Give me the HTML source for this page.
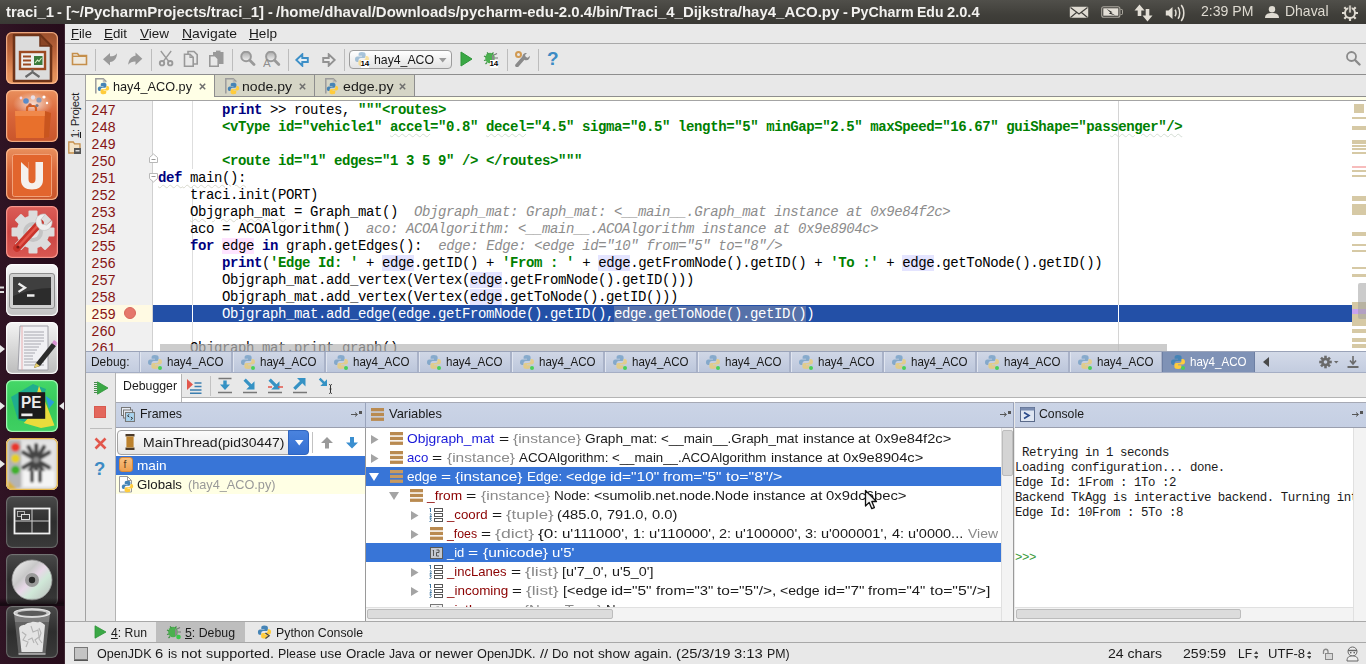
<!DOCTYPE html>
<html>
<head>
<meta charset="utf-8">
<title>PyCharm Edu</title>
<style>
*{box-sizing:border-box;margin:0;padding:0}
html,body{width:1366px;height:664px;overflow:hidden;background:#e8e8e8;font-family:"Liberation Sans",sans-serif;}
.abs{position:absolute}
.t{position:absolute;white-space:pre;line-height:1}
.ln{position:absolute;left:5.600px;font-size:14px;letter-spacing:.25px;color:#861414;line-height:17px;height:17px}
.cl{position:absolute;left:72px;font-family:"Liberation Mono",monospace;font-size:14px;letter-spacing:-0.4px;line-height:17px;height:17px;white-space:pre;color:#000}
.con{font-family:"Liberation Mono",monospace;font-size:12.4px;letter-spacing:-0.44px;line-height:14px}
.kw{color:#000080;font-weight:bold}
.st{color:#008000;font-weight:bold}
.hint{color:#8c8c8c;font-style:italic}
.hl{background:#e4e4ff}
.hlw{background:#ffe4ff}
.wv{text-decoration:underline wavy #d8d8cc 1px;text-underline-offset:2px}
.wv2{text-decoration:underline wavy #d4dcd4 1px;text-underline-offset:2px}
</style>
</head>
<body>
<div class="abs" style="left:0px;top:0px;width:1366px;height:24px;background:linear-gradient(#504f4a,#403f3a 60%,#3a3935)"></div>
<div class="t " id="t1" style="left:6.0px;top:4.5px;font-size:14.8px;color:#f2f1ef;font-weight:bold;transform:scaleX(1.0048);transform-origin:0 0;">traci_1</div>
<div class="t " id="t2" style="left:57.48px;top:4.5px;font-size:14.8px;color:#f2f1ef;font-weight:bold;transform:scaleX(0.9884);transform-origin:0 0;">-</div>
<div class="t " id="t3" style="left:65.89px;top:4.5px;font-size:14.8px;color:#f2f1ef;font-weight:bold;transform:scaleX(1.0140);transform-origin:0 0;">[~/PycharmProjects/traci_1]</div>
<div class="t " id="t4" style="left:267.5px;top:4.5px;font-size:14.8px;color:#f2f1ef;font-weight:bold;transform:scaleX(0.9884);transform-origin:0 0;">-</div>
<div class="t " id="t5" style="left:275.91px;top:4.5px;font-size:14.8px;color:#f2f1ef;font-weight:bold;transform:scaleX(1.0119);transform-origin:0 0;">/home/dhaval/Downloads/pycharm-edu-2.0.4/bin/Traci_4_Dijkstra/hay4_ACO.py</div>
<div class="t " id="t6" style="left:842.76px;top:4.5px;font-size:14.8px;color:#f2f1ef;font-weight:bold;transform:scaleX(0.9884);transform-origin:0 0;">-</div>
<div class="t " id="t7" style="left:851.17px;top:4.5px;font-size:14.8px;color:#f2f1ef;font-weight:bold;transform:scaleX(0.9648);transform-origin:0 0;">PyCharm</div>
<div class="t " id="t8" style="left:917.38px;top:4.5px;font-size:14.8px;color:#f2f1ef;font-weight:bold;transform:scaleX(0.9487);transform-origin:0 0;">Edu</div>
<div class="t " id="t9" style="left:947.44px;top:4.5px;font-size:14.8px;color:#f2f1ef;font-weight:bold;transform:scaleX(0.9890);transform-origin:0 0;">2.0.4</div>
<svg class="abs" style="left:1069px;top:6px;" width="20" height="13" viewBox="0 0 20 13"><rect x=".8" y=".8" width="18.400" height="11" rx="1" fill="#dfdbd2"/><path d="M1.500 1.500 10 8l8.500-6.500M1.500 11.500 7.500 6.500M18.500 11.500l-6-5" fill="none" stroke="#3f3e3a" stroke-width="1.100"/></svg>
<svg class="abs" style="left:1101px;top:6px;" width="22" height="12" viewBox="0 0 22 12"><rect x=".7" y=".7" width="18.200" height="10.600" rx="2" fill="none" stroke="#aaa79e" stroke-width="1.100"/><path d="M19.500 3.500h1.300c.5 0 .7.300.7.700v3.600c0 .4-.2.700-.7.700h-1.300" fill="none" stroke="#aaa79e" stroke-width="1"/><rect x="2.300" y="2.300" width="15" height="7.400" fill="#e3dfd6"/><path d="M5.500 2.800 11.500 6.300 9.800 6.800l4.700 2.600-6.800-2 1.800-.7z" fill="#2f2e2b"/></svg>
<svg class="abs" style="left:1133.5px;top:3.5px;" width="19" height="18" viewBox="0 0 19 18"><path d="M5.500.5.5 6.500h3.200V12h3.600V6.500h3.200z M13.500 17.500l5-6h-3.200V5h-3.600v6.500H8.500z" fill="#e3dfd6"/></svg>
<svg class="abs" style="left:1165px;top:3.5px;" width="21" height="18" viewBox="0 0 21 18"><path d="M.8 6.500h2.700L7.500 3v12l-4-3.500H.8z" fill="#e3dfd6"/><path d="M10 5.800c1.300 1.500 1.300 5 0 6.500M13 3.300c2.300 2.700 2.300 8.700 0 11.400M16.200 1c3.500 4 3.500 12 0 16" fill="none" stroke="#e3dfd6" stroke-width="1.500"/></svg>
<div class="t " id="t10" style="left:1201px;top:4px;font-size:14.6px;color:#dfdbd2;transform:scaleX(0.9658);transform-origin:0 0;">2:39 PM</div>
<svg class="abs" style="left:1265px;top:6px;" width="14" height="12" viewBox="0 0 14 12"><circle cx="7" cy="3.300" r="3.200" fill="#dfdbd2"/><path d="M0 12c0-4 3-5 7-5s7 1 7 5z" fill="#dfdbd2"/></svg>
<div class="t " id="t11" style="left:1285px;top:4px;font-size:14.6px;color:#dfdbd2;transform:scaleX(0.9574);transform-origin:0 0;">Dhaval</div>
<svg class="abs" style="left:1341px;top:4px;" width="18" height="17" viewBox="0 0 18 17"><g fill="none" stroke="#dfdbd2"><circle cx="9" cy="9" r="5" stroke-width="2"/><path d="M9 1v3M9 14v3M1 9h3M14 9h3M3.300 3.300l2 2M12.700 12.700l2 2M3.300 14.700l2-2M12.700 5.300l2-2" stroke-width="2.200"/></g><rect x="7.800" y="1" width="2.400" height="8" fill="#dfdbd2" stroke="#403f3a" stroke-width=".8"/></svg>
<div class="abs" style="left:0px;top:24px;width:65px;height:640px;background:linear-gradient(90deg,#301424,#2a0f1e 50%,#260c1a);border-right:1px solid #3d2431"></div>
<div class="abs" style="left:6px;top:32px;width:52px;height:52px;border-radius:6px;background:linear-gradient(#9a4f2c,#b9623a 35%,#e38d58 80%,#e9985f);box-shadow:inset 0 0 0 1px rgba(255,190,150,.55);overflow:hidden"><svg width="52" height="52" viewBox="0 0 52 52"><path d="M8 3h26l11 11v35H8z" fill="#dcdcdc" stroke="#6e3318" stroke-width="2.600" stroke-linejoin="round"/><path d="M34 3v11h11z" fill="#8a4525" stroke="#6e3318" stroke-width="1.500"/><rect x="14" y="20" width="25" height="17" fill="#efefef" stroke="#9c4a22" stroke-width="2.400"/><path d="M17 24.500h8M17 28.500h8M17 32.500h8" stroke="#9c4a22" stroke-width="2.200"/><rect x="28" y="24" width="8.500" height="9" fill="#3b7a3b"/><path d="M29 31l2.500-3 1.500 1.500 2.500-3.500" stroke="#d8f0c8" fill="none" stroke-width="1.100"/><path d="M26.500 37v3M19.500 45l7-5 7 5" stroke="#6a6a6a" stroke-width="2.200" fill="none"/></svg><div style="position:absolute;left:0;top:0;width:52px;height:52px;border-radius:6px;box-shadow:inset 0 0 0 1.300px rgba(255,190,150,.55)"></div></div>
<div class="abs" style="left:6px;top:90px;width:52px;height:52px;border-radius:6px;background:linear-gradient(#e9905d,#d9663a 45%,#c9552b);box-shadow:inset 0 0 0 1px rgba(255,200,160,.5);overflow:hidden"><svg width="52" height="52" viewBox="0 0 52 52"><defs><radialGradient id="gl" cx=".5" cy=".5" r=".5"><stop offset="0" stop-color="#fff" stop-opacity=".75"/><stop offset="1" stop-color="#fff" stop-opacity="0"/></radialGradient></defs><ellipse cx="27" cy="14" rx="20" ry="12" fill="url(#gl)"/><path d="M9 21h30l-1 27H10z" fill="#e8702c"/><path d="M39 21l6 2-2 24-5 1z" fill="#c9551e"/><path d="M9 21h30l-.2 5H9.200z" fill="#f0884a"/><path d="M21 21v-2.500c0-1.500 1-2.500 2.500-2.500h4c1.500 0 2.500 1 2.500 2.500V21" fill="none" stroke="#d9601f" stroke-width="2.200"/><circle cx="20" cy="11" r="2.800" fill="#5a8ac8"/><circle cx="27" cy="7.500" r="2.200" fill="#e8e0e8"/><circle cx="33" cy="10" r="2.600" fill="#8a9ab8"/><circle cx="24" cy="15" r="1.800" fill="#c05a3a"/><circle cx="31" cy="15.500" r="1.600" fill="#7a7a8a"/><circle cx="38" cy="7" r="1.600" fill="#fff"/><circle cx="15" cy="8" r="1.400" fill="#f4d8e8"/><circle cx="41" cy="13" r="1.200" fill="#fff"/></svg><div style="position:absolute;left:0;top:0;width:52px;height:52px;border-radius:6px;box-shadow:inset 0 0 0 1.300px rgba(255,200,160,.5)"></div></div>
<div class="abs" style="left:6px;top:148px;width:52px;height:52px;border-radius:6px;background:linear-gradient(#e9905d,#d9663a 45%,#c9552b);box-shadow:inset 0 0 0 1px rgba(255,200,160,.5);overflow:hidden"><svg width="52" height="52" viewBox="0 0 52 52"><rect x="6.500" y="6.500" width="39" height="42" rx="2" fill="#e2652d" stroke="#f2a27a" stroke-width="1"/><path d="M15 14h7.500v17c0 3 1.300 4.200 3.500 4.200s3.500-1.200 3.500-4.200V14H37v18c0 6.500-4.500 9.500-11 9.500S15 38.500 15 32z" fill="#f5f0ed"/><path d="M15 14h7.500v7z" fill="#e2652d"/></svg><div style="position:absolute;left:0;top:0;width:52px;height:52px;border-radius:6px;box-shadow:inset 0 0 0 1.300px rgba(255,200,160,.5)"></div></div>
<div class="abs" style="left:6px;top:206px;width:52px;height:52px;border-radius:6px;background:linear-gradient(#dc5e58,#cb4341 50%,#d85852);box-shadow:inset 0 0 0 1px rgba(255,170,160,.5);overflow:hidden"><svg width="52" height="52" viewBox="0 0 52 52"><g transform="translate(27 26)"><g fill="#dcdcdc"><circle r="16.500"/><g id="tt"><rect x="-4.500" y="-21.500" width="9" height="8" rx="1"/></g><use href="#tt" transform="rotate(45)"/><use href="#tt" transform="rotate(90)"/><use href="#tt" transform="rotate(135)"/><use href="#tt" transform="rotate(180)"/><use href="#tt" transform="rotate(225)"/><use href="#tt" transform="rotate(270)"/><use href="#tt" transform="rotate(315)"/></g><circle r="10" fill="#c4c4c4"/><circle r="6" fill="#e4e4e4"/></g><path d="M11 42 34 17" stroke="#c9342b" stroke-width="7.500" stroke-linecap="round"/><path d="M12.500 40.500 33 18" stroke="#e4574b" stroke-width="2.500" stroke-linecap="round"/><path d="M31 20c-3.500-6.500 1-13 8.500-12l-4.500 5.500 1 4.500 4.500 1 5.500-4.500c1 7.500-5.500 12-12 9z" fill="#eeeeee" stroke="#bdbdbd" stroke-width=".6"/><circle cx="12" cy="41" r="1.600" fill="#7a1d18"/></svg><div style="position:absolute;left:0;top:0;width:52px;height:52px;border-radius:6px;box-shadow:inset 0 0 0 1.300px rgba(255,170,160,.5)"></div></div>
<div class="abs" style="left:6px;top:264px;width:52px;height:52px;border-radius:6px;background:linear-gradient(#f6f6f6,#c2c2c2);box-shadow:inset 0 0 0 1px rgba(255,255,255,.6);overflow:hidden"><svg width="52" height="52" viewBox="0 0 52 52"><rect x="3.500" y="9.500" width="45" height="35" rx="2.500" fill="#cfcfcf" stroke="#8e8e8e"/><rect x="7" y="13" width="38" height="28" fill="#2c2c2c"/><path d="M7 13h38v11c-13 0-25 3-38 8z" fill="#505050" opacity=".55"/><path d="M12.500 19.500l6.500 4.200-6.500 4.200" fill="none" stroke="#eee" stroke-width="2.300"/><path d="M21 31.500h7.500" stroke="#eee" stroke-width="2.300"/></svg><div style="position:absolute;left:0;top:0;width:52px;height:52px;border-radius:6px;box-shadow:inset 0 0 0 1.300px rgba(255,255,255,.6)"></div></div>
<div class="abs" style="left:6px;top:322px;width:52px;height:52px;border-radius:6px;background:linear-gradient(#f4f4f4,#bcbcbc);box-shadow:inset 0 0 0 1px rgba(255,255,255,.6);overflow:hidden"><svg width="52" height="52" viewBox="0 0 52 52"><path d="M14 4h28v44H12z" fill="#f1f1f4" stroke="#a0a0a8"/><path d="M16 4v44" stroke="#e6a0a0" stroke-width=".8"/><g stroke="#a8a8b0" stroke-width="1"><path d="M18 10h20M18 13h20M18 16h20M18 19h20M18 22h17M18 25h15M18 28h13M18 31h11M18 34h9M18 37h9M18 40h20M18 43h20"/></g><path d="M30 41 46 21l4 3-16 20-6 2z" fill="#2b2b2b"/><path d="M46 21l2-3 4 3-2 3z" fill="#d890d0"/><path d="M30 41l-2 5 6-2z" fill="#e8d070"/></svg><div style="position:absolute;left:0;top:0;width:52px;height:52px;border-radius:6px;box-shadow:inset 0 0 0 1.300px rgba(255,255,255,.6)"></div></div>
<div class="abs" style="left:6px;top:380px;width:52px;height:52px;border-radius:6px;background:linear-gradient(#45d868,#36c85a 50%,#3fd062);box-shadow:inset 0 0 0 1px rgba(190,255,200,.55);overflow:hidden"><svg width="52" height="52" viewBox="0 0 52 52"><path d="M5 17 27 4l13 5-10 35-18-4z" fill="#1fae8e"/><path d="M33 5.800 48.500 45.600 35 48 17.700 42.900 25 35z" fill="#e8dc3c"/><path d="M39.400 15.800 48.400 22 43 28.400z" fill="#2a9fd8"/><rect x="12.600" y="12.200" width="26.600" height="26.600" fill="#1b1b1b"/><text x="15" y="27.600" font-family="Liberation Sans" font-weight="bold" font-size="16" fill="#ececec" textLength="20.500" lengthAdjust="spacingAndGlyphs">PE</text><rect x="15.300" y="33.500" width="11.200" height="2.700" fill="#ececec"/></svg><div style="position:absolute;left:0;top:0;width:52px;height:52px;border-radius:6px;box-shadow:inset 0 0 0 1.300px rgba(190,255,200,.55)"></div></div>
<div class="abs" style="left:6px;top:438px;width:52px;height:52px;border-radius:6px;background:#d4d4d4;box-shadow:inset 0 0 0 1px #e6b84c;overflow:hidden"><svg width="52" height="52" viewBox="0 0 52 52"><defs><filter id="bl" x="-20%" y="-20%" width="140%" height="140%"><feGaussianBlur stdDeviation="0.9"/></filter></defs><rect x="0" y="0" width="52" height="52" fill="#dadada"/><g filter="url(#bl)"><rect x="16" y="3" width="33" height="46" fill="#e4e4e4"/><rect x="2" y="2" width="13" height="48" rx="2" fill="#b4b4b4"/><circle cx="9.400" cy="9.300" r="4.300" fill="#e8362c"/><circle cx="9.400" cy="20.500" r="4.300" fill="#e6d020"/><circle cx="9.400" cy="32" r="4.300" fill="#3fb02a"/><g stroke="#2e2e2e" stroke-width="4.200" stroke-linecap="round" opacity=".88"><path d="M30.200 7v30M17.500 14.500 43 29.500M43 14.500 17.500 29.500M22.500 9l15.500 26M38 9 22.500 35"/></g><circle cx="30.200" cy="22" r="3" fill="#8a8a8a"/><rect x="17.500" y="33" width="31" height="16" fill="#f4f4f4"/><path d="M26 34v9M34 34v9" stroke="#333" stroke-width="3.500" stroke-linecap="round"/><path d="M2 42l9 9H2z" fill="#d8b040"/></g></svg><div style="position:absolute;left:0;top:0;width:52px;height:52px;border-radius:6px;box-shadow:inset 0 0 0 1.300px #e6b84c"></div></div>
<div class="abs" style="left:6px;top:496px;width:52px;height:52px;border-radius:6px;background:linear-gradient(#4a4a4a,#2e2e2e 50%,#3a3a3a);box-shadow:inset 0 0 0 1px rgba(255,255,255,.12);overflow:hidden"><svg width="52" height="52" viewBox="0 0 52 52"><rect x="8.500" y="12.500" width="35" height="25" fill="none" stroke="#f0f0f0" stroke-width="1.800"/><path d="M26 13v24M9 25h34" stroke="#d0d0d0" stroke-width="1"/><rect x="11.500" y="15.500" width="7" height="5" fill="#3a3a3a" stroke="#ccc" stroke-width=".8"/><rect x="15.500" y="18.500" width="8" height="5" fill="#3a3a3a" stroke="#eee" stroke-width=".9"/></svg><div style="position:absolute;left:0;top:0;width:52px;height:52px;border-radius:6px;box-shadow:inset 0 0 0 1.300px rgba(255,255,255,.12)"></div></div>
<div class="abs" style="left:6px;top:554px;width:52px;height:52px;border-radius:6px;background:linear-gradient(#4a4a4a,#2e2e2e 50%,#3a3a3a);box-shadow:inset 0 0 0 1px rgba(255,255,255,.12);overflow:hidden"><svg width="52" height="52" viewBox="0 0 52 52"><defs><linearGradient id="cd" x1="0" y1="0" x2="1" y2="1"><stop offset="0" stop-color="#f4f4f4"/><stop offset=".35" stop-color="#c8c8c8"/><stop offset=".5" stop-color="#e8d8e8"/><stop offset=".65" stop-color="#d0e8d8"/><stop offset="1" stop-color="#b8b8b8"/></linearGradient></defs><circle cx="26" cy="26" r="20" fill="url(#cd)" stroke="#999" stroke-width=".8"/><circle cx="26" cy="26" r="7" fill="#9a9a9a"/><circle cx="26" cy="26" r="3.200" fill="#2a2a2a"/></svg><div style="position:absolute;left:0;top:0;width:52px;height:52px;border-radius:6px;box-shadow:inset 0 0 0 1.300px rgba(255,255,255,.12)"></div></div>
<div class="abs" style="left:6px;top:606px;width:52px;height:52px;border-radius:6px;background:linear-gradient(#4a4a4a,#2e2e2e 50%,#3a3a3a);box-shadow:inset 0 0 0 1px rgba(255,255,255,.12);overflow:hidden"><svg width="52" height="52" viewBox="0 0 52 52"><path d="M8 7h36l-4.500 41h-27z" fill="#9a9a9a" opacity=".45"/><path d="M8 7h36l-1 9H9z" fill="#b0b0b0" opacity=".35"/><ellipse cx="26" cy="7" rx="18" ry="4.200" fill="#c8c8c8" stroke="#ececec" stroke-width="1.200"/><ellipse cx="26" cy="7.300" rx="14.500" ry="2.600" fill="#5a5a5a"/><path d="M13 22c2-4 5-2 7-4s4-1 6-2 5 1 7 0 4 2 6 3l-2.500 27h-21z" fill="#eeeeee" opacity=".93"/><path d="M16 26l4 3-3 5 5 2-2 5M25 20l2 6 5-2 1 7-4 3 3 5M22 34l4-2 2 5M33 22l2 5-2 6 3 4" stroke="#b4b4b4" fill="none" stroke-width="1.100"/><path d="M12.500 48h27" stroke="#b8b8b8" stroke-width="1.500"/></svg><div style="position:absolute;left:0;top:0;width:52px;height:52px;border-radius:6px;box-shadow:inset 0 0 0 1.300px rgba(255,255,255,.12)"></div></div>
<div class="abs" style="left:0px;top:598px;width:64px;height:7px;background:linear-gradient(rgba(10,4,8,0),rgba(10,4,8,.75))"></div>
<div class="abs" style="left:0px;top:604px;width:64px;height:1.5px;background:#170a12"></div>
<svg class="abs" style="left:0px;top:286px;" width="4" height="8" viewBox="0 0 4 8"><path d="M0 1.500h4M0 6h4" stroke="#ddd" stroke-width="1.800"/></svg>
<svg class="abs" style="left:0px;top:345px;" width="5" height="8" viewBox="0 0 5 8"><path d="M0 0 5 4 0 8z" fill="#e8e8e8"/></svg>
<svg class="abs" style="left:0px;top:401.5px;" width="5" height="8" viewBox="0 0 5 8"><path d="M0 0 5 4 0 8z" fill="#e8e8e8"/></svg>
<svg class="abs" style="left:0px;top:460px;" width="5" height="8" viewBox="0 0 5 8"><path d="M0 0 5 4 0 8z" fill="#e8e8e8"/></svg>
<svg class="abs" style="left:59px;top:401.5px;" width="5" height="8" viewBox="0 0 5 8"><path d="M5 0 0 4 5 8z" fill="#e8e8e8"/></svg>
<div class="abs" style="left:65px;top:24px;width:1301px;height:20px;background:#e9e9e9;border-bottom:1px solid #a9a9a9"></div>
<div class="t " id="t12" style="left:71px;top:27.5px;font-size:12.8px;color:#1a1a1a;transform:scaleX(1.0174);transform-origin:0 0;"><u>F</u>ile</div>
<div class="t " id="t13" style="left:104px;top:27.5px;font-size:12.8px;color:#1a1a1a;transform:scaleX(1.0425);transform-origin:0 0;"><u>E</u>dit</div>
<div class="t " id="t14" style="left:140px;top:27.5px;font-size:12.8px;color:#1a1a1a;transform:scaleX(1.0539);transform-origin:0 0;"><u>V</u>iew</div>
<div class="t " id="t15" style="left:182px;top:27.5px;font-size:12.8px;color:#1a1a1a;transform:scaleX(1.0888);transform-origin:0 0;"><u>N</u>avigate</div>
<div class="t " id="t16" style="left:249px;top:27.5px;font-size:12.8px;color:#1a1a1a;transform:scaleX(1.0635);transform-origin:0 0;"><u>H</u>elp</div>
<div class="abs" style="left:65px;top:44px;width:1301px;height:31px;background:#e8e8e8;border-bottom:1px solid #8e8e8e"></div>
<svg class="abs" style="left:71px;top:51px;" width="17" height="15" viewBox="0 0 17 15"><path d="M1.500 13.500V2.500h5l1.500 2h7.500v9z" fill="#efe9de" stroke="#c58f4b" stroke-width="1.600"/><path d="M1.500 5.300h14" stroke="#c58f4b" stroke-width="1.400"/></svg>
<div class="abs" style="left:95px;top:49px;width:1px;height:22px;background:#bcbcbc"></div>
<svg class="abs" style="left:102px;top:51px;" width="16" height="16" viewBox="0 0 16 16"><path d="M1 8.300 8 2v3.300c3 0 5.500-.8 7-3.100 0 4.800-2.500 8.300-7 8.800v3.500z" fill="#999"/></svg>
<svg class="abs" style="left:127px;top:51px;" width="16" height="16" viewBox="0 0 16 16"><path d="M15.300 7.800 8.500 1.500v3.200C4.300 5.200 1.600 8.500 1.200 13.800c1.800-2.500 4-3.300 7.300-3.300v3.500z" fill="#999"/></svg>
<div class="abs" style="left:151px;top:49px;width:1px;height:22px;background:#bcbcbc"></div>
<svg class="abs" style="left:158px;top:50px;" width="16" height="17" viewBox="0 0 16 17"><g fill="none" stroke="#999"><path d="M2.800 1 10.800 11.500M13.200 1 5.200 11.500" stroke-width="1.300"/><circle cx="4" cy="13.200" r="2.200" stroke-width="1.900"/><circle cx="12.200" cy="13.200" r="2.200" stroke-width="1.900"/></g></svg>
<svg class="abs" style="left:183px;top:50px;" width="16" height="17" viewBox="0 0 16 17"><g fill="#e8e8e8" stroke="#999" stroke-width="1.600"><path d="M5 1.500h6l3.200 3.200v9.300H5z"/><path d="M1.500 4.200h5.500l3.200 3.200v8.800H1.500z"/><path d="M7 4.200v3.200h3.200" fill="none" stroke-width="1.200"/></g></svg>
<svg class="abs" style="left:208px;top:50px;" width="16" height="17" viewBox="0 0 16 17"><path d="M5 2h10.500v12H5z" fill="#999"/><rect x="8" y=".6" width="4.500" height="1.400" fill="#999"/><path d="M1.800 5.800h5.400l3 3v7.400H1.800z" fill="#e8e8e8" stroke="#999" stroke-width="1.600"/></svg>
<div class="abs" style="left:232px;top:49px;width:1px;height:22px;background:#bcbcbc"></div>
<svg class="abs" style="left:240px;top:51px;" width="16" height="16" viewBox="0 0 16 16"><defs><linearGradient id="mg" x1="0" y1="0" x2="0" y2="1"><stop offset="0" stop-color="#a8a8a8"/><stop offset="1" stop-color="#f4f4f4"/></linearGradient></defs><circle cx="6.100" cy="5.500" r="4.800" fill="url(#mg)" stroke="#999" stroke-width="2"/><path d="M9.800 9.300 14 13.500" stroke="#999" stroke-width="2.800" stroke-linecap="round"/></svg>
<svg class="abs" style="left:263px;top:51px;" width="18" height="17" viewBox="0 0 18 17"><g transform="translate(1.800,0)"><defs><linearGradient id="mg" x1="0" y1="0" x2="0" y2="1"><stop offset="0" stop-color="#a8a8a8"/><stop offset="1" stop-color="#f4f4f4"/></linearGradient></defs><circle cx="6.100" cy="5.500" r="4.800" fill="url(#mg)" stroke="#999" stroke-width="2"/><path d="M9.800 9.300 14 13.500" stroke="#999" stroke-width="2.800" stroke-linecap="round"/></g><text x="0" y="16.300" font-family="Liberation Sans" font-size="11.500" fill="#8f8f8f">A</text></svg>
<div class="abs" style="left:288px;top:49px;width:1px;height:22px;background:#bcbcbc"></div>
<svg class="abs" style="left:295px;top:52.5px;" width="15" height="14" viewBox="0 0 15 14"><path d="M1.300 7 7.300 1.300v3.700h5.500v4H7.300v3.700z" fill="#e4eef5" stroke="#3d8fc7" stroke-width="1.900"/></svg>
<svg class="abs" style="left:321px;top:52.5px;" width="15" height="14" viewBox="0 0 15 14"><g transform="translate(15,0) scale(-1,1)"><path d="M1.300 7 7.300 1.300v3.700h5.500v4H7.300v3.700z" fill="#ececec" stroke="#929292" stroke-width="1.900"/></g></svg>
<div class="abs" style="left:344px;top:49px;width:1px;height:22px;background:#bcbcbc"></div>
<div class="abs" style="left:349px;top:50px;width:103px;height:19px;border:1px solid #9c9c9c;border-radius:4px;background:linear-gradient(#ffffff,#e3e3e3)"></div>
<svg class="abs" style="left:354px;top:51px;" width="16" height="16" viewBox="0 0 16 16"><g opacity="0.45"><path d="M7.800 1C5 1 4.600 2.200 4.600 3.200v1.600h3.400v.6H3.200C1.800 5.400 1 6.600 1 8.200c0 1.700.8 2.800 2.200 2.800h1.300V9.300c0-1.300 1-2.300 2.300-2.300h3c1 0 1.800-.8 1.800-1.800V3.200C11.600 1.800 10.400 1 7.800 1z" fill="#4584b6"/><path d="M8.200 15c2.800 0 3.200-1.200 3.200-2.200v-1.600H8v-.6h4.800c1.400 0 2.200-1.200 2.200-2.800 0-1.700-.8-2.800-2.200-2.800h-1.300v1.700c0 1.300-1 2.300-2.300 2.300h-3c-1 0-1.800.8-1.800 1.800v2c0 1.400 1.200 2.200 3.800 2.200z" fill="#ffcc3b"/></g></svg>
<div class="t " id="t17" style="left:360.5px;top:60px;font-size:8px;color:#000;font-weight:bold;background:#fff;letter-spacing:-.2px;">14</div>
<div class="t " id="t18" style="left:374px;top:53px;font-size:13px;color:#1a1a1a;transform:scaleX(0.9435);transform-origin:0 0;">hay4_ACO</div>
<svg class="abs" style="left:439px;top:58px;" width="8" height="5" viewBox="0 0 8 5"><path d="M0 0h7.500L3.700 4.500z" fill="#9a9a9a"/></svg>
<svg class="abs" style="left:460px;top:51px;" width="13" height="16" viewBox="0 0 13 16"><path d="M1 1 12 8 1 15z" fill="#3aa845" stroke="#2e9639" stroke-width="1"/></svg>
<svg class="abs" style="left:483px;top:50px;" width="16" height="17" viewBox="0 0 16 17"><g><ellipse cx="7" cy="8" rx="4.800" ry="5.300" fill="#4bb04f"/><path d="M4 2.500 5.500 4M10.500 2.500 9 4M1 6l2 1M1 10.500l2-.5M2.500 14l1.500-1.500" stroke="#3d8f41" stroke-width="1.200"/><path d="M9 4.500c3 1 3 6 0 7.500z" fill="#8a8a8a"/><path d="M11 5l3-1.500M12 8h3M11 11l3 1.500" stroke="#777" stroke-width="1.200"/></g></svg>
<div class="t " id="t19" style="left:489.5px;top:60px;font-size:8px;color:#000;font-weight:bold;background:#fff;letter-spacing:-.2px;">14</div>
<div class="abs" style="left:507px;top:49px;width:1px;height:22px;background:#bcbcbc"></div>
<svg class="abs" style="left:514px;top:50px;" width="17" height="17" viewBox="0 0 17 17"><path d="M3 15.500 9.500 8" stroke="#8a8a8a" stroke-width="3.600" stroke-linecap="round"/><path d="M9 8.500c-1.500-3 .5-6 4-5.500l-2 2 .8 2 2 .8 2-2c.5 3.500-2.500 5.500-5.500 4z" fill="#8a8a8a"/><circle cx="4.500" cy="4.500" r="2.500" fill="none" stroke="#d19a52" stroke-width="2"/></svg>
<div class="abs" style="left:538px;top:49px;width:1px;height:22px;background:#bcbcbc"></div>
<div class="t " id="t20" style="left:547px;top:49px;font-size:19px;color:#3d8bc4;font-weight:bold;">?</div>
<svg class="abs" style="left:1345px;top:50px;" width="16" height="16" viewBox="0 0 16 16"><circle cx="6.500" cy="6.500" r="4.500" fill="none" stroke="#8a8a8a" stroke-width="1.800"/><path d="M10 10l4.500 4.500" stroke="#8a8a8a" stroke-width="2.400" stroke-linecap="round"/></svg>
<div class="abs" style="left:65px;top:75px;width:21px;height:546px;background:#e8e8e8;border-right:1px solid #a2a2a2"></div>
<div class="t " id="t21" style="left:70px;top:137.5px;font-size:11.4px;color:#1a1a1a;transform:rotate(-90deg);transform-origin:0 0;letter-spacing:-0.312px;"><u>1</u>: Project</div>
<svg class="abs" style="left:68px;top:141px;" width="14" height="14" viewBox="0 0 14 14"><path d="M.8 12V1h4.500l1.200 1.800h5.500V12z" fill="#f3e3c7" stroke="#c58f4b" stroke-width="1.300"/><rect x="6" y="7" width="7" height="6" fill="#555"/><rect x="7.500" y="9" width="4" height="1.500" fill="#ddd"/></svg>
<div class="abs" style="left:86px;top:75px;width:1280px;height:22px;background:#e8e8e8"></div>
<div class="abs" style="left:215px;top:75px;width:100px;height:22px;background:#d5d5c6;border-right:1px solid #8e8e8e;border-bottom:1px solid #8e8e8e"></div>
<div class="abs" style="left:315px;top:75px;width:100px;height:22px;background:#d5d5c6;border-right:1px solid #8e8e8e;border-bottom:1px solid #8e8e8e"></div>
<div class="abs" style="left:415px;top:96px;width:951px;height:1px;background:#8e8e8e"></div>
<div class="abs" style="left:86px;top:97px;width:1280px;height:3px;background:#ffffe6"></div>
<div class="abs" style="left:86px;top:100px;width:1280px;height:1px;background:#a4a4a4"></div>
<div class="abs" style="left:86px;top:75px;width:128px;height:25px;background:#ffffe6"></div>
<div class="abs" style="left:214px;top:75px;width:1px;height:22px;background:#8e8e8e"></div>
<svg class="abs" style="left:95px;top:77.5px;" width="12" height="16" viewBox="0 0 12 16"><path d="M.8 15.500V.8h7.500l3 3" fill="none" stroke="#9c9c9c" stroke-width="1.500"/><path d="M8.300.8v3h3" fill="none" stroke="#b4b4b4" stroke-width="1"/></svg>
<svg class="abs" style="left:96.5px;top:82px;" width="13" height="13" viewBox="0 0 16 16"><g opacity="1"><path d="M7.800 1C5 1 4.600 2.200 4.600 3.200v1.600h3.400v.6H3.200C1.800 5.400 1 6.600 1 8.200c0 1.700.8 2.800 2.200 2.800h1.300V9.300c0-1.300 1-2.300 2.300-2.300h3c1 0 1.800-.8 1.800-1.800V3.200C11.600 1.800 10.400 1 7.800 1z" fill="#4584b6"/><path d="M8.200 15c2.800 0 3.200-1.200 3.200-2.200v-1.600H8v-.6h4.800c1.400 0 2.200-1.200 2.200-2.800 0-1.700-.8-2.800-2.200-2.800h-1.300v1.700c0 1.300-1 2.300-2.300 2.300h-3c-1 0-1.800.8-1.800 1.800v2c0 1.400 1.200 2.200 3.800 2.200z" fill="#ffcc3b"/></g></svg>
<div class="t " id="t22" style="left:113px;top:81px;font-size:12.8px;color:#1a1a1a;transform:scaleX(0.9916);transform-origin:0 0;">hay4_ACO.py</div>
<svg class="abs" style="left:199px;top:83px;" width="7" height="7" viewBox="0 0 7 7"><path d="M.8.800 6.200 6.200M6.200.800.800 6.200" stroke="#6e6e6e" stroke-width="1.500"/></svg>
<svg class="abs" style="left:225px;top:77.5px;" width="12" height="16" viewBox="0 0 12 16"><path d="M.8 15.500V.8h7.500l3 3" fill="none" stroke="#9c9c9c" stroke-width="1.500"/><path d="M8.300.8v3h3" fill="none" stroke="#b4b4b4" stroke-width="1"/></svg>
<svg class="abs" style="left:226.5px;top:82px;" width="13" height="13" viewBox="0 0 16 16"><g opacity="1"><path d="M7.800 1C5 1 4.600 2.200 4.600 3.200v1.600h3.400v.6H3.200C1.800 5.400 1 6.600 1 8.200c0 1.700.8 2.800 2.200 2.800h1.300V9.300c0-1.300 1-2.300 2.300-2.300h3c1 0 1.800-.8 1.800-1.800V3.200C11.600 1.800 10.400 1 7.800 1z" fill="#4584b6"/><path d="M8.200 15c2.800 0 3.200-1.200 3.200-2.200v-1.600H8v-.6h4.800c1.400 0 2.200-1.200 2.200-2.800 0-1.700-.8-2.800-2.200-2.800h-1.300v1.700c0 1.300-1 2.300-2.300 2.300h-3c-1 0-1.800.8-1.800 1.800v2c0 1.400 1.200 2.200 3.800 2.200z" fill="#ffcc3b"/></g></svg>
<div class="t " id="t23" style="left:242px;top:81px;font-size:12.8px;color:#1a1a1a;transform:scaleX(1.0978);transform-origin:0 0;">node.py</div>
<svg class="abs" style="left:299px;top:83px;" width="7" height="7" viewBox="0 0 7 7"><path d="M.8.800 6.200 6.200M6.200.800.800 6.200" stroke="#6e6e6e" stroke-width="1.500"/></svg>
<svg class="abs" style="left:324.5px;top:77.5px;" width="12" height="16" viewBox="0 0 12 16"><path d="M.8 15.500V.8h7.500l3 3" fill="none" stroke="#9c9c9c" stroke-width="1.500"/><path d="M8.300.8v3h3" fill="none" stroke="#b4b4b4" stroke-width="1"/></svg>
<svg class="abs" style="left:326.0px;top:82px;" width="13" height="13" viewBox="0 0 16 16"><g opacity="1"><path d="M7.800 1C5 1 4.600 2.200 4.600 3.200v1.600h3.400v.6H3.200C1.800 5.400 1 6.600 1 8.200c0 1.700.8 2.800 2.200 2.800h1.300V9.300c0-1.300 1-2.300 2.300-2.300h3c1 0 1.800-.8 1.800-1.800V3.200C11.600 1.800 10.400 1 7.800 1z" fill="#4584b6"/><path d="M8.200 15c2.800 0 3.200-1.200 3.200-2.200v-1.600H8v-.6h4.800c1.400 0 2.200-1.200 2.200-2.800 0-1.700-.8-2.800-2.200-2.800h-1.300v1.700c0 1.300-1 2.300-2.300 2.300h-3c-1 0-1.800.8-1.800 1.800v2c0 1.400 1.200 2.200 3.800 2.200z" fill="#ffcc3b"/></g></svg>
<div class="t " id="t24" style="left:342.5px;top:81px;font-size:12.8px;color:#1a1a1a;transform:scaleX(1.1087);transform-origin:0 0;">edge.py</div>
<svg class="abs" style="left:399px;top:83px;" width="7" height="7" viewBox="0 0 7 7"><path d="M.8.800 6.200 6.200M6.200.800.800 6.200" stroke="#6e6e6e" stroke-width="1.500"/></svg>
<div class="abs" style="left:86px;top:101px;width:1280px;height:250px;background:#fff;overflow:hidden">
<div class="abs" style="left:0px;top:0px;width:67px;height:251px;background:#f0f0f0;border-right:1px solid #d0d0d0"></div>
<div class="abs" style="left:67px;top:204px;width:1199px;height:17px;background:#2350a7"></div>
<div class="abs" style="left:0px;top:204px;width:66px;height:17px;background:#fffae3"></div>
<div class="abs" style="left:106px;top:0px;width:1px;height:68px;background:#dedede"></div>
<div class="abs" style="left:106px;top:85px;width:1px;height:119px;background:#dedede"></div>
<div class="abs" style="left:106px;top:204px;width:1px;height:17px;background:#fff"></div>
<div class="abs" style="left:106px;top:221px;width:1px;height:29px;background:#dedede"></div>
<div class="abs" style="left:1032px;top:0px;width:1px;height:204px;background:#d4d4d4"></div>
<div class="abs" style="left:1032px;top:204px;width:1px;height:17px;background:#fff"></div>
<div class="abs" style="left:1032px;top:221px;width:1px;height:29px;background:#d4d4d4"></div>
<div class="ln" style="top:1px">247</div>
<div class="cl" style="top:1px">        <span class="kw">print</span> &gt;&gt; routes, <span class="st">"""&lt;routes&gt;</span></div>
<div class="ln" style="top:18px">248</div>
<div class="cl" style="top:18px">        <span class="st">&lt;vType id="vehicle1" </span><span class="st wv2">accel</span><span class="st">="0.8" </span><span class="st wv2">decel</span><span class="st">="4.5" sigma="0.5" length="5" minGap="2.5" maxSpeed="16.67" guiShape="pas</span><span class="st wv2">senger"/&gt;</span></div>
<div class="ln" style="top:35px">249</div>
<div class="cl" style="top:35px"></div>
<div class="ln" style="top:52px">250</div>
<div class="cl" style="top:52px">        <span class="st">&lt;route id="1" edges="1 3 5 9" /&gt; &lt;/routes&gt;"""</span></div>
<div class="ln" style="top:69px">251</div>
<div class="cl" style="top:69px"><span class="wv"><span class="kw">def</span> main():</span></div>
<div class="ln" style="top:86px">252</div>
<div class="cl" style="top:86px">    traci.init(PORT)</div>
<div class="ln" style="top:103px">253</div>
<div class="cl" style="top:103px">    <span class="wv">Objgraph_mat</span> = Graph_mat()  <span class="hint">Objgraph_mat: Graph_mat: &lt;__main__.Graph_mat instance at 0x9e84f2c&gt;</span></div>
<div class="ln" style="top:120px">254</div>
<div class="cl" style="top:120px">    aco = ACOAlgorithm()  <span class="hint">aco: ACOAlgorithm: &lt;__main__.ACOAlgorithm instance at 0x9e8904c&gt;</span></div>
<div class="ln" style="top:137px">255</div>
<div class="cl" style="top:137px">    <span class="kw">for</span> <span class="hlw">edge</span> <span class="kw">in</span> graph.getEdges():  <span class="hint">edge: Edge: &lt;edge id="10" from="5" to="8"/&gt;</span></div>
<div class="ln" style="top:154px">256</div>
<div class="cl" style="top:154px">        <span class="kw">print</span>(<span class="st">'Edge Id: '</span> + <span class="hl">edge</span>.getID() + <span class="st">'From : '</span> + <span class="hl">edge</span>.getFromNode().getID() + <span class="st">'To :'</span> + <span class="hl">edge</span>.getToNode().getID())</div>
<div class="ln" style="top:171px">257</div>
<div class="cl" style="top:171px">        Objgraph_mat.add_vertex(Vertex(<span class="hl">edge</span>.getFromNode().getID()))</div>
<div class="ln" style="top:188px">258</div>
<div class="cl" style="top:188px">        Objgraph_mat.add_vertex(Vertex(<span class="hl">edge</span>.getToNode().getID()))</div>
<div class="ln" style="top:205px">259</div>
<div class="cl" style="top:205px">        <span style="color:#fff">Objgraph_mat.add_edge(edge.getFromNode().getID(),<span style="background:#5671a9">edge.getToNode().getID()</span>)</span></div>
<div class="ln" style="top:222px">260</div>
<div class="cl" style="top:222px"></div>
<div class="ln" style="top:239px">261</div>
<div class="cl" style="top:239px">    Objgraph_mat.print_graph()</div>
<svg class="abs" style="left:62px;top:52px;" width="11" height="11" viewBox="0 0 11 11"><path d="M1.500 9.500V4.500L5.500 1l4 3.500v5z" fill="#fff" stroke="#b8b8b8"/><path d="M3.500 6.500h4" stroke="#999"/></svg>
<svg class="abs" style="left:62px;top:71px;" width="11" height="11" viewBox="0 0 11 11"><path d="M1.500 1.500v5L5.500 10l4-3.500v-5z" fill="#fff" stroke="#b8b8b8"/><path d="M3.500 4.500h4" stroke="#999"/></svg>
<div class="abs" style="left:38px;top:206px;width:12px;height:12px;border-radius:6px;background:#e5776b;border:1px solid #d8675b"></div>
<div class="abs" style="left:74px;top:242.5px;width:1007px;height:8px;background:rgba(185,185,185,.72)"></div>
<div class="abs" style="left:1266px;top:0px;width:14px;height:251px;background:#fff"></div>
<div class="abs" style="left:1268px;top:2.5px;width:10px;height:9.5px;background:#d6c9a5"></div>
<div class="abs" style="left:1266px;top:16px;width:14px;height:2px;background:#d6c9a5"></div>
<div class="abs" style="left:1266px;top:25px;width:14px;height:4px;background:#d6c9a5"></div>
<div class="abs" style="left:1266px;top:39px;width:14px;height:3.5px;background:#d6c9a5"></div>
<div class="abs" style="left:1266px;top:44px;width:14px;height:1.5px;background:#d6c9a5"></div>
<div class="abs" style="left:1266px;top:47px;width:14px;height:2px;background:#d6c9a5"></div>
<div class="abs" style="left:1266px;top:51px;width:14px;height:2px;background:#d6c9a5"></div>
<div class="abs" style="left:1266px;top:65px;width:14px;height:2px;background:#f7bcbc"></div>
<div class="abs" style="left:1266px;top:69px;width:14px;height:2px;background:#d6c9a5"></div>
<div class="abs" style="left:1266px;top:74px;width:14px;height:2px;background:#d6c9a5"></div>
<div class="abs" style="left:1266px;top:95px;width:14px;height:5px;background:#d6c9a5"></div>
<div class="abs" style="left:1266px;top:103px;width:14px;height:11px;background:#d6c9a5"></div>
<div class="abs" style="left:1266px;top:131px;width:14px;height:4px;background:#d6c9a5"></div>
<div class="abs" style="left:1266px;top:143px;width:14px;height:2px;background:#d6c9a5"></div>
<div class="abs" style="left:1266px;top:149px;width:14px;height:2px;background:#d6c9a5"></div>
<div class="abs" style="left:1266px;top:166px;width:14px;height:2px;background:#d6c9a5"></div>
<div class="abs" style="left:1266px;top:173px;width:14px;height:3px;background:#d6c9a5"></div>
<div class="abs" style="left:1266px;top:200.5px;width:14px;height:24.5px;background:#d6c9a5"></div>
<div class="abs" style="left:1266px;top:228px;width:14px;height:4px;background:#d6c9a5"></div>
<div class="abs" style="left:1266px;top:237px;width:14px;height:4px;background:#d6c9a5"></div>
<div class="abs" style="left:1266px;top:243px;width:14px;height:4px;background:#d6c9a5"></div>
<div class="abs" style="left:1266px;top:208px;width:14px;height:4.5px;background:#c9a3ee"></div>
<div class="abs" style="left:1272px;top:182px;width:8px;height:35.5px;background:rgba(160,160,160,.55);border-radius:2px 0 0 2px"></div>
</div>
<div class="abs" style="left:86px;top:351px;width:1280px;height:22px;background:linear-gradient(#d3dae8,#c3ccdf);border-top:1px solid #9aa3b8;border-bottom:1px solid #a5aec4"></div>
<div class="t " id="t25" style="left:91px;top:357px;font-size:11.9px;color:#1a1a1a;transform:scaleX(1.0041);transform-origin:0 0;">Debug:</div>
<div class="abs" style="left:139px;top:352px;width:93px;height:20px;background:linear-gradient(#d0d7e6,#bcc6db);border-left:1px solid #a9b2c8;border-right:1px solid #a9b2c8;box-shadow:inset 1px 0 0 #e0e5f0"></div>
<svg class="abs" style="left:147px;top:354px;" width="16" height="16" viewBox="0 0 16 16"><g opacity="0.5"><path d="M7.800 1C5 1 4.600 2.200 4.600 3.200v1.600h3.400v.6H3.200C1.800 5.400 1 6.600 1 8.200c0 1.700.8 2.800 2.200 2.800h1.300V9.300c0-1.300 1-2.300 2.300-2.300h3c1 0 1.800-.8 1.800-1.800V3.200C11.600 1.800 10.400 1 7.800 1z" fill="#4584b6"/><path d="M8.200 15c2.800 0 3.200-1.200 3.200-2.200v-1.600H8v-.6h4.800c1.400 0 2.200-1.200 2.200-2.800 0-1.700-.8-2.800-2.200-2.800h-1.300v1.700c0 1.300-1 2.300-2.300 2.300h-3c-1 0-1.800.8-1.800 1.800v2c0 1.400 1.200 2.200 3.800 2.200z" fill="#ffcc3b"/></g></svg>
<div class="abs" style="left:157.5px;top:365.5px;width:4.5px;height:4.5px;border-radius:3px;background:#4ad058"></div>
<div class="t " id="t26" style="left:167px;top:357px;font-size:11.9px;color:#1a1a1a;transform:scaleX(0.9713);transform-origin:0 0;">hay4_ACO</div>
<div class="abs" style="left:232px;top:352px;width:93px;height:20px;background:linear-gradient(#d0d7e6,#bcc6db);border-left:1px solid #a9b2c8;border-right:1px solid #a9b2c8;box-shadow:inset 1px 0 0 #e0e5f0"></div>
<svg class="abs" style="left:240px;top:354px;" width="16" height="16" viewBox="0 0 16 16"><g opacity="0.5"><path d="M7.800 1C5 1 4.600 2.200 4.600 3.200v1.600h3.400v.6H3.200C1.800 5.400 1 6.600 1 8.200c0 1.700.8 2.800 2.200 2.800h1.300V9.300c0-1.300 1-2.300 2.300-2.300h3c1 0 1.800-.8 1.800-1.800V3.200C11.600 1.800 10.400 1 7.800 1z" fill="#4584b6"/><path d="M8.200 15c2.800 0 3.200-1.200 3.200-2.200v-1.600H8v-.6h4.800c1.400 0 2.200-1.200 2.200-2.800 0-1.700-.8-2.800-2.200-2.800h-1.300v1.700c0 1.300-1 2.300-2.300 2.300h-3c-1 0-1.800.8-1.800 1.800v2c0 1.400 1.200 2.200 3.800 2.200z" fill="#ffcc3b"/></g></svg>
<div class="abs" style="left:250.5px;top:365.5px;width:4.5px;height:4.5px;border-radius:3px;background:#4ad058"></div>
<div class="t " id="t27" style="left:260px;top:357px;font-size:11.9px;color:#1a1a1a;transform:scaleX(0.9713);transform-origin:0 0;">hay4_ACO</div>
<div class="abs" style="left:325px;top:352px;width:93px;height:20px;background:linear-gradient(#d0d7e6,#bcc6db);border-left:1px solid #a9b2c8;border-right:1px solid #a9b2c8;box-shadow:inset 1px 0 0 #e0e5f0"></div>
<svg class="abs" style="left:333px;top:354px;" width="16" height="16" viewBox="0 0 16 16"><g opacity="0.5"><path d="M7.800 1C5 1 4.600 2.200 4.600 3.200v1.600h3.400v.6H3.200C1.800 5.400 1 6.600 1 8.200c0 1.700.8 2.800 2.200 2.800h1.300V9.300c0-1.300 1-2.300 2.300-2.300h3c1 0 1.800-.8 1.800-1.800V3.200C11.600 1.800 10.400 1 7.800 1z" fill="#4584b6"/><path d="M8.200 15c2.800 0 3.200-1.200 3.200-2.200v-1.600H8v-.6h4.800c1.400 0 2.200-1.200 2.200-2.800 0-1.700-.8-2.800-2.200-2.800h-1.300v1.700c0 1.300-1 2.300-2.300 2.300h-3c-1 0-1.800.8-1.800 1.800v2c0 1.400 1.200 2.200 3.800 2.200z" fill="#ffcc3b"/></g></svg>
<div class="abs" style="left:343.5px;top:365.5px;width:4.5px;height:4.5px;border-radius:3px;background:#4ad058"></div>
<div class="t " id="t28" style="left:353px;top:357px;font-size:11.9px;color:#1a1a1a;transform:scaleX(0.9713);transform-origin:0 0;">hay4_ACO</div>
<div class="abs" style="left:418px;top:352px;width:93px;height:20px;background:linear-gradient(#d0d7e6,#bcc6db);border-left:1px solid #a9b2c8;border-right:1px solid #a9b2c8;box-shadow:inset 1px 0 0 #e0e5f0"></div>
<svg class="abs" style="left:426px;top:354px;" width="16" height="16" viewBox="0 0 16 16"><g opacity="0.5"><path d="M7.800 1C5 1 4.600 2.200 4.600 3.200v1.600h3.400v.6H3.200C1.800 5.400 1 6.600 1 8.200c0 1.700.8 2.800 2.200 2.800h1.300V9.300c0-1.300 1-2.300 2.300-2.300h3c1 0 1.800-.8 1.800-1.800V3.200C11.600 1.800 10.400 1 7.800 1z" fill="#4584b6"/><path d="M8.200 15c2.800 0 3.200-1.200 3.200-2.200v-1.600H8v-.6h4.800c1.400 0 2.200-1.200 2.200-2.800 0-1.700-.8-2.800-2.200-2.800h-1.300v1.700c0 1.300-1 2.300-2.300 2.300h-3c-1 0-1.800.8-1.800 1.800v2c0 1.400 1.200 2.200 3.800 2.200z" fill="#ffcc3b"/></g></svg>
<div class="abs" style="left:436.5px;top:365.5px;width:4.5px;height:4.5px;border-radius:3px;background:#4ad058"></div>
<div class="t " id="t29" style="left:446px;top:357px;font-size:11.9px;color:#1a1a1a;transform:scaleX(0.9713);transform-origin:0 0;">hay4_ACO</div>
<div class="abs" style="left:511px;top:352px;width:93px;height:20px;background:linear-gradient(#d0d7e6,#bcc6db);border-left:1px solid #a9b2c8;border-right:1px solid #a9b2c8;box-shadow:inset 1px 0 0 #e0e5f0"></div>
<svg class="abs" style="left:519px;top:354px;" width="16" height="16" viewBox="0 0 16 16"><g opacity="0.5"><path d="M7.800 1C5 1 4.600 2.200 4.600 3.200v1.600h3.400v.6H3.200C1.800 5.400 1 6.600 1 8.200c0 1.700.8 2.800 2.200 2.800h1.300V9.300c0-1.300 1-2.300 2.300-2.300h3c1 0 1.800-.8 1.800-1.800V3.200C11.600 1.800 10.400 1 7.800 1z" fill="#4584b6"/><path d="M8.200 15c2.800 0 3.200-1.200 3.200-2.200v-1.600H8v-.6h4.800c1.400 0 2.200-1.200 2.200-2.800 0-1.700-.8-2.800-2.200-2.800h-1.300v1.700c0 1.300-1 2.300-2.300 2.300h-3c-1 0-1.800.8-1.800 1.800v2c0 1.400 1.200 2.200 3.800 2.200z" fill="#ffcc3b"/></g></svg>
<div class="abs" style="left:529.5px;top:365.5px;width:4.5px;height:4.5px;border-radius:3px;background:#4ad058"></div>
<div class="t " id="t30" style="left:539px;top:357px;font-size:11.9px;color:#1a1a1a;transform:scaleX(0.9713);transform-origin:0 0;">hay4_ACO</div>
<div class="abs" style="left:604px;top:352px;width:93px;height:20px;background:linear-gradient(#d0d7e6,#bcc6db);border-left:1px solid #a9b2c8;border-right:1px solid #a9b2c8;box-shadow:inset 1px 0 0 #e0e5f0"></div>
<svg class="abs" style="left:612px;top:354px;" width="16" height="16" viewBox="0 0 16 16"><g opacity="0.5"><path d="M7.800 1C5 1 4.600 2.200 4.600 3.200v1.600h3.400v.6H3.200C1.800 5.400 1 6.600 1 8.200c0 1.700.8 2.800 2.200 2.800h1.300V9.300c0-1.300 1-2.300 2.300-2.300h3c1 0 1.800-.8 1.800-1.800V3.200C11.600 1.800 10.400 1 7.800 1z" fill="#4584b6"/><path d="M8.200 15c2.800 0 3.200-1.200 3.200-2.200v-1.600H8v-.6h4.800c1.400 0 2.200-1.200 2.200-2.800 0-1.700-.8-2.800-2.200-2.800h-1.300v1.700c0 1.300-1 2.300-2.300 2.300h-3c-1 0-1.800.8-1.800 1.800v2c0 1.400 1.200 2.200 3.800 2.200z" fill="#ffcc3b"/></g></svg>
<div class="abs" style="left:622.5px;top:365.5px;width:4.5px;height:4.5px;border-radius:3px;background:#4ad058"></div>
<div class="t " id="t31" style="left:632px;top:357px;font-size:11.9px;color:#1a1a1a;transform:scaleX(0.9713);transform-origin:0 0;">hay4_ACO</div>
<div class="abs" style="left:697px;top:352px;width:93px;height:20px;background:linear-gradient(#d0d7e6,#bcc6db);border-left:1px solid #a9b2c8;border-right:1px solid #a9b2c8;box-shadow:inset 1px 0 0 #e0e5f0"></div>
<svg class="abs" style="left:705px;top:354px;" width="16" height="16" viewBox="0 0 16 16"><g opacity="0.5"><path d="M7.800 1C5 1 4.600 2.200 4.600 3.200v1.600h3.400v.6H3.200C1.800 5.400 1 6.600 1 8.200c0 1.700.8 2.800 2.200 2.800h1.300V9.300c0-1.300 1-2.300 2.300-2.300h3c1 0 1.800-.8 1.800-1.800V3.200C11.600 1.800 10.400 1 7.800 1z" fill="#4584b6"/><path d="M8.200 15c2.800 0 3.200-1.200 3.200-2.200v-1.600H8v-.6h4.800c1.400 0 2.200-1.200 2.200-2.800 0-1.700-.8-2.800-2.200-2.800h-1.300v1.700c0 1.300-1 2.300-2.300 2.300h-3c-1 0-1.800.8-1.800 1.800v2c0 1.400 1.200 2.200 3.800 2.200z" fill="#ffcc3b"/></g></svg>
<div class="abs" style="left:715.5px;top:365.5px;width:4.5px;height:4.5px;border-radius:3px;background:#4ad058"></div>
<div class="t " id="t32" style="left:725px;top:357px;font-size:11.9px;color:#1a1a1a;transform:scaleX(0.9713);transform-origin:0 0;">hay4_ACO</div>
<div class="abs" style="left:790px;top:352px;width:93px;height:20px;background:linear-gradient(#d0d7e6,#bcc6db);border-left:1px solid #a9b2c8;border-right:1px solid #a9b2c8;box-shadow:inset 1px 0 0 #e0e5f0"></div>
<svg class="abs" style="left:798px;top:354px;" width="16" height="16" viewBox="0 0 16 16"><g opacity="0.5"><path d="M7.800 1C5 1 4.600 2.200 4.600 3.200v1.600h3.400v.6H3.200C1.800 5.400 1 6.600 1 8.200c0 1.700.8 2.800 2.200 2.800h1.300V9.300c0-1.300 1-2.300 2.300-2.300h3c1 0 1.800-.8 1.800-1.800V3.200C11.600 1.800 10.400 1 7.800 1z" fill="#4584b6"/><path d="M8.200 15c2.800 0 3.200-1.200 3.200-2.200v-1.600H8v-.6h4.800c1.400 0 2.200-1.200 2.200-2.800 0-1.700-.8-2.800-2.200-2.800h-1.300v1.700c0 1.300-1 2.300-2.300 2.300h-3c-1 0-1.800.8-1.800 1.800v2c0 1.400 1.200 2.200 3.800 2.200z" fill="#ffcc3b"/></g></svg>
<div class="abs" style="left:808.5px;top:365.5px;width:4.5px;height:4.5px;border-radius:3px;background:#4ad058"></div>
<div class="t " id="t33" style="left:818px;top:357px;font-size:11.9px;color:#1a1a1a;transform:scaleX(0.9713);transform-origin:0 0;">hay4_ACO</div>
<div class="abs" style="left:883px;top:352px;width:93px;height:20px;background:linear-gradient(#d0d7e6,#bcc6db);border-left:1px solid #a9b2c8;border-right:1px solid #a9b2c8;box-shadow:inset 1px 0 0 #e0e5f0"></div>
<svg class="abs" style="left:891px;top:354px;" width="16" height="16" viewBox="0 0 16 16"><g opacity="0.5"><path d="M7.800 1C5 1 4.600 2.200 4.600 3.200v1.600h3.400v.6H3.200C1.800 5.400 1 6.600 1 8.200c0 1.700.8 2.800 2.200 2.800h1.300V9.300c0-1.300 1-2.300 2.300-2.300h3c1 0 1.800-.8 1.800-1.800V3.200C11.600 1.800 10.400 1 7.800 1z" fill="#4584b6"/><path d="M8.200 15c2.800 0 3.200-1.200 3.200-2.200v-1.600H8v-.6h4.800c1.400 0 2.200-1.200 2.200-2.800 0-1.700-.8-2.800-2.200-2.800h-1.300v1.700c0 1.300-1 2.300-2.300 2.300h-3c-1 0-1.800.8-1.800 1.800v2c0 1.400 1.200 2.200 3.800 2.200z" fill="#ffcc3b"/></g></svg>
<div class="abs" style="left:901.5px;top:365.5px;width:4.5px;height:4.5px;border-radius:3px;background:#4ad058"></div>
<div class="t " id="t34" style="left:911px;top:357px;font-size:11.9px;color:#1a1a1a;transform:scaleX(0.9713);transform-origin:0 0;">hay4_ACO</div>
<div class="abs" style="left:976px;top:352px;width:93px;height:20px;background:linear-gradient(#d0d7e6,#bcc6db);border-left:1px solid #a9b2c8;border-right:1px solid #a9b2c8;box-shadow:inset 1px 0 0 #e0e5f0"></div>
<svg class="abs" style="left:984px;top:354px;" width="16" height="16" viewBox="0 0 16 16"><g opacity="0.5"><path d="M7.800 1C5 1 4.600 2.200 4.600 3.200v1.600h3.400v.6H3.200C1.800 5.400 1 6.600 1 8.200c0 1.700.8 2.800 2.200 2.800h1.300V9.300c0-1.300 1-2.300 2.300-2.300h3c1 0 1.800-.8 1.800-1.800V3.200C11.600 1.800 10.400 1 7.800 1z" fill="#4584b6"/><path d="M8.200 15c2.800 0 3.200-1.200 3.200-2.200v-1.600H8v-.6h4.800c1.400 0 2.200-1.200 2.200-2.800 0-1.700-.8-2.800-2.200-2.800h-1.300v1.700c0 1.300-1 2.300-2.300 2.300h-3c-1 0-1.800.8-1.800 1.800v2c0 1.400 1.200 2.200 3.800 2.200z" fill="#ffcc3b"/></g></svg>
<div class="abs" style="left:994.5px;top:365.5px;width:4.5px;height:4.5px;border-radius:3px;background:#4ad058"></div>
<div class="t " id="t35" style="left:1004px;top:357px;font-size:11.9px;color:#1a1a1a;transform:scaleX(0.9713);transform-origin:0 0;">hay4_ACO</div>
<div class="abs" style="left:1069px;top:352px;width:93px;height:20px;background:linear-gradient(#d0d7e6,#bcc6db);border-left:1px solid #a9b2c8;border-right:1px solid #a9b2c8;box-shadow:inset 1px 0 0 #e0e5f0"></div>
<svg class="abs" style="left:1077px;top:354px;" width="16" height="16" viewBox="0 0 16 16"><g opacity="0.5"><path d="M7.800 1C5 1 4.600 2.200 4.600 3.200v1.600h3.400v.6H3.200C1.800 5.400 1 6.600 1 8.200c0 1.700.8 2.800 2.200 2.800h1.300V9.300c0-1.300 1-2.300 2.300-2.300h3c1 0 1.800-.8 1.800-1.800V3.200C11.600 1.800 10.400 1 7.800 1z" fill="#4584b6"/><path d="M8.200 15c2.800 0 3.200-1.200 3.200-2.200v-1.600H8v-.6h4.800c1.400 0 2.200-1.200 2.200-2.800 0-1.700-.8-2.800-2.200-2.800h-1.300v1.700c0 1.300-1 2.300-2.300 2.300h-3c-1 0-1.800.8-1.800 1.800v2c0 1.400 1.200 2.200 3.800 2.200z" fill="#ffcc3b"/></g></svg>
<div class="abs" style="left:1087.5px;top:365.5px;width:4.5px;height:4.5px;border-radius:3px;background:#4ad058"></div>
<div class="t " id="t36" style="left:1097px;top:357px;font-size:11.9px;color:#1a1a1a;transform:scaleX(0.9713);transform-origin:0 0;">hay4_ACO</div>
<div class="abs" style="left:1162px;top:352px;width:93px;height:20px;background:#7f92b6;border-left:1px solid #6d7fa3;border-right:1px solid #6d7fa3"></div>
<svg class="abs" style="left:1170px;top:354px;" width="16" height="16" viewBox="0 0 16 16"><g opacity="1"><path d="M7.800 1C5 1 4.600 2.200 4.600 3.200v1.600h3.400v.6H3.200C1.800 5.400 1 6.600 1 8.200c0 1.700.8 2.800 2.200 2.800h1.300V9.300c0-1.300 1-2.300 2.300-2.300h3c1 0 1.800-.8 1.800-1.800V3.200C11.600 1.800 10.400 1 7.800 1z" fill="#4584b6"/><path d="M8.200 15c2.800 0 3.200-1.200 3.200-2.200v-1.600H8v-.6h4.800c1.400 0 2.200-1.200 2.200-2.800 0-1.700-.8-2.800-2.200-2.800h-1.300v1.700c0 1.300-1 2.300-2.300 2.300h-3c-1 0-1.800.8-1.800 1.800v2c0 1.400 1.200 2.200 3.800 2.200z" fill="#ffcc3b"/></g></svg>
<div class="abs" style="left:1180.5px;top:365.5px;width:4.5px;height:4.5px;border-radius:3px;background:#4ad058"></div>
<div class="t " id="t37" style="left:1190px;top:357px;font-size:11.9px;color:#fff;transform:scaleX(0.9713);transform-origin:0 0;">hay4_ACO</div>
<svg class="abs" style="left:1263px;top:357px;" width="6" height="10" viewBox="0 0 6 10"><path d="M6 0 0 5 6 10z" fill="#4a4a4a"/></svg>
<svg class="abs" style="left:1319px;top:355px;" width="20" height="14" viewBox="0 0 20 14"><g transform="translate(6.500 7)"><g fill="#6a6a6a"><circle r="4.300"/><rect x="-1.300" y="-6.300" width="2.600" height="12.600"/><rect x="-1.300" y="-6.300" width="2.600" height="12.600" transform="rotate(45)"/><rect x="-1.300" y="-6.300" width="2.600" height="12.600" transform="rotate(90)"/><rect x="-1.300" y="-6.300" width="2.600" height="12.600" transform="rotate(135)"/></g><circle r="1.800" fill="#c9d1e2"/></g><path d="M15 6h4.500L17.200 8.500z" fill="#6a6a6a"/></svg>
<svg class="abs" style="left:1347px;top:355px;" width="12" height="14" viewBox="0 0 12 14"><path d="M6 1v7M3 5.500 6 9l3-3.500" fill="none" stroke="#6a6a6a" stroke-width="1.600"/><path d="M.5 12h11" stroke="#6a6a6a" stroke-width="2"/></svg>
<div class="abs" style="left:86px;top:373px;width:30px;height:248px;background:#e8e8e8;border-right:1px solid #b4b4b4"></div>
<svg class="abs" style="left:93px;top:381px;" width="16" height="14" viewBox="0 0 16 14"><path d="M4.500 .8 15 7 4.500 13.200z" fill="#3aa845" stroke="#2e9639" stroke-width=".8"/><path d="M1 1.500h3M1 3.500h3M1 5.500h3M1 7.500h3M1 9.500h3M1 11.500h3" stroke="#4a8a4f" stroke-width="1"/></svg>
<div class="abs" style="left:94px;top:406px;width:12px;height:12px;background:#e3675c;border:1px solid #d85a4f"></div>
<div class="abs" style="left:90px;top:428px;width:22px;height:1px;background:#bdbdbd"></div>
<svg class="abs" style="left:94px;top:437px;" width="13" height="13" viewBox="0 0 13 13"><path d="M1.500 1.500 11.500 11.500M11.500 1.500 1.500 11.500" stroke="#e2574c" stroke-width="2.600"/></svg>
<div class="t " id="t38" style="left:94px;top:460px;font-size:18.5px;color:#3d8bc4;font-weight:bold;">?</div>
<div class="abs" style="left:116px;top:373px;width:1250px;height:25px;background:#e8e8e8;border-bottom:1px solid #b4b4b4"></div>
<div class="abs" style="left:116px;top:398px;width:1250px;height:4px;background:#fff"></div>
<div class="abs" style="left:116px;top:374px;width:66px;height:28px;background:#fff;border-right:1px solid #b4b4b4"></div>
<div class="t " id="t39" style="left:122.5px;top:380.5px;font-size:11.9px;color:#1a1a1a;transform:scaleX(1.0338);transform-origin:0 0;">Debugger</div>
<svg class="abs" style="left:186px;top:378px;" width="16" height="16" viewBox="0 0 16 16"><path d="M1 1l6 5.500L1 12z" fill="#e2574c"/><path d="M8.500 5h7M8.500 8.500h7M4 12h11.500M4 15.300h11.500" stroke="#3c7fb0" stroke-width="1.500"/></svg>
<div class="abs" style="left:210px;top:376px;width:1px;height:20px;background:#c2c2c2"></div>
<svg class="abs" style="left:217px;top:377px;" width="16" height="18" viewBox="0 0 16 18"><path d="M1.500 1.500h13" stroke="#777" stroke-width="1.500"/><path d="M6.300 3.500h3.400v4h3.300L8 13 3 7.500h3.300z" fill="#3592c4"/><path d="M1 15.500h14" stroke="#777" stroke-width="1.500"/></svg>
<svg class="abs" style="left:242px;top:377px;" width="16" height="18" viewBox="0 0 16 18"><path d="M1.500 3.800 3.800 1.500 9.500 7.200 12.500 4.200V12.500H4.200L7.200 9.500z" fill="#3592c4"/><path d="M1 15.500h14" stroke="#777" stroke-width="1.500"/></svg>
<svg class="abs" style="left:267px;top:377px;" width="16" height="18" viewBox="0 0 16 18"><path d="M1.500 3.800 3.800 1.500 9.500 7.200 12.500 4.200V12.500H4.200L7.200 9.500z" fill="#3592c4"/><path d="M1 15.500h14" stroke="#777" stroke-width="1.500"/><path d="M1 10h4M11 10h5" stroke="#e2574c" stroke-width="1.500"/></svg>
<svg class="abs" style="left:292px;top:377px;" width="16" height="18" viewBox="0 0 16 18"><path d="M3.500 13 1.200 10.700 8 4 5 1h8.500v8.500L10.300 6.300z" fill="#3592c4"/><path d="M1 15.500h14" stroke="#777" stroke-width="1.500"/></svg>
<svg class="abs" style="left:318px;top:377px;" width="16" height="18" viewBox="0 0 16 18"><path d="M.8 2.500 2.500.8 6.500 4.800 9 2.300V9H2.300L4.800 6.500z" fill="#3592c4"/><path d="M11 7.500c1 0 1.500.5 1.500 1.500v6c0 1-.5 1.500-1.500 1.500M14 7.500c-1 0-1.500.5-1.500 1.500M14 16.500c-1 0-1.500-.5-1.500-1.500M11.500 12h2" fill="none" stroke="#333" stroke-width="1"/></svg>
<div class="abs" style="left:116px;top:402px;width:250px;height:26px;background:linear-gradient(#cbd4e6,#c5cfe3);border-bottom:1px solid #9a9fae;border-top:1px solid #a6a9b4;border-right:1px solid #9aa4bc"></div>
<div class="abs" style="left:366px;top:402px;width:648px;height:26px;background:linear-gradient(#cbd4e6,#c5cfe3);border-bottom:1px solid #9a9fae;border-top:1px solid #a6a9b4;border-right:1px solid #9aa4bc"></div>
<div class="abs" style="left:1015px;top:402px;width:351px;height:26px;background:linear-gradient(#cbd4e6,#c5cfe3);border-bottom:1px solid #9a9fae;border-top:1px solid #a6a9b4"></div>
<svg class="abs" style="left:121px;top:407px;" width="14" height="15" viewBox="0 0 14 15"><rect x=".5" y=".5" width="9" height="8" fill="#e8edf5" stroke="#777"/><rect x="2.500" y="3" width="9" height="8" fill="#e8edf5" stroke="#777"/><rect x="4.500" y="5.500" width="9" height="9" fill="#a9d3ee" stroke="#777" stroke-width="1.100"/><path d="M8.300 7.300 6.500 8.800l1.800 1.200M9.800 10l1.800 1.300-1.800 1.500" fill="none" stroke="#333" stroke-width="1"/></svg>
<div class="t " id="t40" style="left:139.5px;top:408.5px;font-size:11.9px;color:#1a1a1a;transform:scaleX(1.0419);transform-origin:0 0;">Frames</div>
<svg class="abs" style="left:351px;top:410px;" width="12" height="8" viewBox="0 0 12 8"><path d="M0 4.500h6M4 2.500 6.500 4.500 4 6.500" fill="none" stroke="#555" stroke-width="1"/><rect x="8" y="1" width="3" height="3" fill="#555"/></svg>
<svg class="abs" style="left:371px;top:408px;" width="13" height="13" viewBox="0 0 13 13"><rect x="0" y="0" width="13" height="3.300" fill="#b98a50"/><rect x="0" y="4.800" width="13" height="3.300" fill="#b98a50"/><rect x="0" y="9.600" width="13" height="3.300" fill="#b98a50"/></svg>
<div class="t " id="t41" style="left:389px;top:408.5px;font-size:11.9px;color:#1a1a1a;transform:scaleX(1.0882);transform-origin:0 0;">Variables</div>
<svg class="abs" style="left:1000px;top:410px;" width="12" height="8" viewBox="0 0 12 8"><path d="M0 4.500h6M4 2.500 6.500 4.500 4 6.500" fill="none" stroke="#555" stroke-width="1"/><rect x="8" y="1" width="3" height="3" fill="#555"/></svg>
<svg class="abs" style="left:1020px;top:407px;" width="15" height="15" viewBox="0 0 15 15"><rect x=".5" y=".5" width="14" height="14" fill="#dfe6f2" stroke="#5a6a8a"/><rect x=".5" y=".5" width="14" height="3" fill="#7a8cb0"/><path d="M4 5.500 9 8.500 4 11.500" fill="none" stroke="#2a4a8a" stroke-width="1.600"/></svg>
<div class="t " id="t42" style="left:1038.5px;top:408.5px;font-size:11.9px;color:#1a1a1a;transform:scaleX(1.0311);transform-origin:0 0;">Console</div>
<svg class="abs" style="left:1352px;top:410px;" width="12" height="8" viewBox="0 0 12 8"><path d="M0 4.500h6M4 2.500 6.500 4.500 4 6.500" fill="none" stroke="#555" stroke-width="1"/><rect x="8" y="1" width="3" height="3" fill="#555"/></svg>
<div class="abs" style="left:116px;top:428px;width:250px;height:193px;background:#fff;border-right:1px solid #9a9a9a"></div>
<div class="abs" style="left:117px;top:430px;width:192px;height:25px;border:1px solid #a3a3a3;border-radius:4px;background:linear-gradient(#fbfbfb,#e6e6e6)"></div>
<div class="abs" style="left:288px;top:430px;width:21px;height:25px;border-radius:0 4px 4px 0;background:linear-gradient(#4a83de,#3570d2);border:1px solid #2f65c0"></div>
<svg class="abs" style="left:294.5px;top:440px;" width="9" height="6" viewBox="0 0 9 6"><path d="M0 0h8.500L4.250 5.500z" fill="#fff"/></svg>
<svg class="abs" style="left:125px;top:434px;" width="10" height="16" viewBox="0 0 10 16"><rect x=".5" y="0" width="9" height="2.500" fill="#4a3a2a"/><rect x=".5" y="13.500" width="9" height="2.500" fill="#4a3a2a"/><rect x="1.500" y="2.500" width="7" height="11" fill="#d89a3a"/><path d="M1.500 4h7M1.500 6h7M1.500 8h7M1.500 10h7M1.500 12h7" stroke="#9a6520" stroke-width=".9"/></svg>
<div class="t " id="t43" style="left:142.5px;top:436px;font-size:13px;color:#1a1a1a;transform:scaleX(1.0758);transform-origin:0 0;">MainThread(pid30447)</div>
<div class="abs" style="left:312px;top:432px;width:1px;height:21px;background:#c2c2c2"></div>
<svg class="abs" style="left:321px;top:437px;" width="12" height="12" viewBox="0 0 12 12"><path d="M6 0 0 6h4v5.500h4V6h4z" fill="#9a9a9a"/></svg>
<svg class="abs" style="left:346px;top:437px;" width="12" height="12" viewBox="0 0 12 12"><g transform="translate(0,11.500) scale(1,-1)"><path d="M6 0 0 6h4v5.500h4V6h4z" fill="#3b8fd0"/></g></svg>
<div class="abs" style="left:116px;top:456px;width:249px;height:19px;background:#3875d7"></div>
<div class="abs" style="left:119px;top:457px;width:14px;height:15px;border-radius:3px;background:linear-gradient(#f8c080,#eea050);border:1px solid #d88a3a"></div>
<div class="t " id="t44" style="left:123.5px;top:459px;font-size:10.5px;color:#5a3a1a;">f</div>
<div class="t " id="t45" style="left:137px;top:459.5px;font-size:12.4px;color:#fff;transform:scaleX(1.0983);transform-origin:0 0;">main</div>
<div class="abs" style="left:116px;top:475px;width:249px;height:19px;background:#ffffe4"></div>
<svg class="abs" style="left:119px;top:476px;" width="14" height="17" viewBox="0 0 14 17"><path d="M.5.500h8l4 4v11.500H.5z" fill="#fdfdfd" stroke="#9a9a9a"/><path d="M8.500.500v4h4" fill="none" stroke="#9a9a9a"/></svg>
<svg class="abs" style="left:121px;top:480px;" width="13" height="13" viewBox="0 0 16 16"><g opacity="1"><path d="M7.800 1C5 1 4.600 2.200 4.600 3.200v1.600h3.400v.6H3.200C1.800 5.400 1 6.600 1 8.200c0 1.700.8 2.800 2.200 2.800h1.300V9.300c0-1.300 1-2.300 2.300-2.300h3c1 0 1.800-.8 1.800-1.800V3.200C11.600 1.800 10.400 1 7.800 1z" fill="#4584b6"/><path d="M8.200 15c2.800 0 3.200-1.200 3.200-2.200v-1.600H8v-.6h4.800c1.400 0 2.200-1.200 2.200-2.800 0-1.700-.8-2.800-2.200-2.800h-1.300v1.700c0 1.300-1 2.300-2.300 2.300h-3c-1 0-1.800.8-1.800 1.800v2c0 1.400 1.200 2.200 3.800 2.200z" fill="#ffcc3b"/></g></svg>
<div class="t " id="t46" style="left:137px;top:478.5px;font-size:12.4px;color:#1a1a1a;transform:scaleX(1.0710);transform-origin:0 0;">Globals</div>
<div class="t " id="t47" style="left:188px;top:478.5px;font-size:12.4px;color:#999;transform:scaleX(1.0245);transform-origin:0 0;">(hay4_ACO.py)</div>
<div class="abs" style="left:366px;top:428px;width:648px;height:193px;background:#fff;overflow:hidden;border-right:1px solid #9a9a9a">
<svg class="abs" style="left:4.5px;top:6.5px;" width="8" height="9" viewBox="0 0 8 9"><path d="M0 0 7.500 4.500 0 9z" fill="#a4a4a4"/></svg>
<svg class="abs" style="left:24px;top:4px;" width="13" height="13" viewBox="0 0 13 13"><rect x="0" y="0" width="13" height="3.300" fill="#b98a50"/><rect x="0" y="4.800" width="13" height="3.300" fill="#b98a50"/><rect x="0" y="9.600" width="13" height="3.300" fill="#b98a50"/></svg>
<div class="t " id="t48" style="left:41.0px;top:4.5px;font-size:12.4px;color:#1a1ad8;transform:scaleX(1.1136);transform-origin:0 0;">Objgraph_mat</div>
<div class="t " id="t49" style="left:132.51px;top:4.5px;font-size:12.4px;color:#1a1a1a;transform:scaleX(1.4028);transform-origin:0 0;">=</div>
<div class="t " id="t50" style="left:146.75px;top:4.5px;font-size:12.4px;color:#8a8a8a;transform:scaleX(1.2515);transform-origin:0 0;">{instance}</div>
<div class="t " id="t51" style="left:218.94px;top:4.5px;font-size:12.4px;color:#1a1a1a;transform:scaleX(1.1032);transform-origin:0 0;">Graph_mat:</div>
<div class="t " id="t52" style="left:295.21px;top:4.5px;font-size:12.4px;color:#1a1a1a;transform:scaleX(1.0801);transform-origin:0 0;">&lt;__main__.Graph_mat</div>
<div class="t " id="t53" style="left:436.54px;top:4.5px;font-size:12.4px;color:#1a1a1a;transform:scaleX(1.1236);transform-origin:0 0;">instance</div>
<div class="t " id="t54" style="left:492.47px;top:4.5px;font-size:12.4px;color:#1a1a1a;transform:scaleX(1.1795);transform-origin:0 0;">at</div>
<div class="t " id="t55" style="left:508.74px;top:4.5px;font-size:12.4px;color:#1a1a1a;transform:scaleX(1.1838);transform-origin:0 0;">0x9e84f2c&gt;</div>
<svg class="abs" style="left:4.5px;top:25.5px;" width="8" height="9" viewBox="0 0 8 9"><path d="M0 0 7.500 4.500 0 9z" fill="#a4a4a4"/></svg>
<svg class="abs" style="left:24px;top:23px;" width="13" height="13" viewBox="0 0 13 13"><rect x="0" y="0" width="13" height="3.300" fill="#b98a50"/><rect x="0" y="4.800" width="13" height="3.300" fill="#b98a50"/><rect x="0" y="9.600" width="13" height="3.300" fill="#b98a50"/></svg>
<div class="t " id="t56" style="left:41.0px;top:23.5px;font-size:12.4px;color:#1a1ad8;transform:scaleX(1.0673);transform-origin:0 0;">aco</div>
<div class="t " id="t57" style="left:66.39px;top:23.5px;font-size:12.4px;color:#1a1a1a;transform:scaleX(1.4014);transform-origin:0 0;">=</div>
<div class="t " id="t58" style="left:80.61px;top:23.5px;font-size:12.4px;color:#8a8a8a;transform:scaleX(1.2502);transform-origin:0 0;">{instance}</div>
<div class="t " id="t59" style="left:152.73px;top:23.5px;font-size:12.4px;color:#1a1a1a;transform:scaleX(1.0817);transform-origin:0 0;">ACOAlgorithm:</div>
<div class="t " id="t60" style="left:246.18px;top:23.5px;font-size:12.4px;color:#1a1a1a;transform:scaleX(1.0699);transform-origin:0 0;">&lt;__main__.ACOAlgorithm</div>
<div class="t " id="t61" style="left:404.64px;top:23.5px;font-size:12.4px;color:#1a1a1a;transform:scaleX(1.1223);transform-origin:0 0;">instance</div>
<div class="t " id="t62" style="left:460.5px;top:23.5px;font-size:12.4px;color:#1a1a1a;transform:scaleX(1.1785);transform-origin:0 0;">at</div>
<div class="t " id="t63" style="left:476.76px;top:23.5px;font-size:12.4px;color:#1a1a1a;transform:scaleX(1.1822);transform-origin:0 0;">0x9e8904c&gt;</div>
<div class="abs" style="left:0px;top:39px;width:635px;height:19px;background:#3875d7"></div>
<svg class="abs" style="left:3px;top:45px;" width="10" height="8" viewBox="0 0 10 8"><path d="M0 0h10L5 8z" fill="#fff"/></svg>
<svg class="abs" style="left:24px;top:42px;" width="13" height="13" viewBox="0 0 13 13"><rect x="0" y="0" width="13" height="3.300" fill="#c89a60"/><rect x="0" y="4.800" width="13" height="3.300" fill="#c89a60"/><rect x="0" y="9.600" width="13" height="3.300" fill="#c89a60"/></svg>
<div class="t " id="t64" style="left:41.0px;top:42.5px;font-size:12.4px;color:#fff;transform:scaleX(1.0936);transform-origin:0 0;">edge</div>
<div class="t " id="t65" style="left:75.18px;top:42.5px;font-size:12.4px;color:#fff;transform:scaleX(1.3862);transform-origin:0 0;">=</div>
<div class="t " id="t66" style="left:89.26px;top:42.5px;font-size:12.4px;color:#fff;transform:scaleX(1.2374);transform-origin:0 0;">{instance}</div>
<div class="t " id="t67" style="left:160.64px;top:42.5px;font-size:12.4px;color:#fff;transform:scaleX(1.0864);transform-origin:0 0;">Edge:</div>
<div class="t " id="t68" style="left:199.85px;top:42.5px;font-size:12.4px;color:#fff;transform:scaleX(1.1550);transform-origin:0 0;">&lt;edge</div>
<div class="t " id="t69" style="left:244.08px;top:42.5px;font-size:12.4px;color:#fff;transform:scaleX(1.2481);transform-origin:0 0;">id="10"</div>
<div class="t " id="t70" style="left:297.37px;top:42.5px;font-size:12.4px;color:#fff;transform:scaleX(1.2220);transform-origin:0 0;">from="5"</div>
<div class="t " id="t71" style="left:359.7px;top:42.5px;font-size:12.4px;color:#fff;transform:scaleX(1.2814);transform-origin:0 0;">to="8"/&gt;</div>
<svg class="abs" style="left:23px;top:64px;" width="10" height="8" viewBox="0 0 10 8"><path d="M0 0h10L5 8z" fill="#a4a4a4"/></svg>
<svg class="abs" style="left:44px;top:61px;" width="13" height="13" viewBox="0 0 13 13"><rect x="0" y="0" width="13" height="3.300" fill="#b98a50"/><rect x="0" y="4.800" width="13" height="3.300" fill="#b98a50"/><rect x="0" y="9.600" width="13" height="3.300" fill="#b98a50"/></svg>
<div class="t " id="t72" style="left:61.0px;top:61.5px;font-size:12.4px;color:#8b0000;transform:scaleX(1.1077);transform-origin:0 0;">_from</div>
<div class="t " id="t73" style="left:100.23px;top:61.5px;font-size:12.4px;color:#1a1a1a;transform:scaleX(1.4234);transform-origin:0 0;">=</div>
<div class="t " id="t74" style="left:114.68px;top:61.5px;font-size:12.4px;color:#8a8a8a;transform:scaleX(1.2704);transform-origin:0 0;">{instance}</div>
<div class="t " id="t75" style="left:187.97px;top:61.5px;font-size:12.4px;color:#1a1a1a;transform:scaleX(1.0923);transform-origin:0 0;">Node:</div>
<div class="t " id="t76" style="left:228.23px;top:61.5px;font-size:12.4px;color:#1a1a1a;transform:scaleX(1.1498);transform-origin:0 0;">&lt;sumolib.net.node.Node</div>
<div class="t " id="t77" style="left:387.19px;top:61.5px;font-size:12.4px;color:#1a1a1a;transform:scaleX(1.1407);transform-origin:0 0;">instance</div>
<div class="t " id="t78" style="left:443.97px;top:61.5px;font-size:12.4px;color:#1a1a1a;transform:scaleX(1.1978);transform-origin:0 0;">at</div>
<div class="t " id="t79" style="left:460.48px;top:61.5px;font-size:12.4px;color:#1a1a1a;transform:scaleX(1.1987);transform-origin:0 0;">0x9dc6bec&gt;</div>
<svg class="abs" style="left:44.5px;top:82.5px;" width="8" height="9" viewBox="0 0 8 9"><path d="M0 0 7.500 4.500 0 9z" fill="#a4a4a4"/></svg>
<svg class="abs" style="left:63px;top:80px;" width="15" height="14" viewBox="0 0 15 14"><g fill="none" stroke="#555" stroke-width="1"><rect x="5.500" y=".5" width="8" height="3"/><rect x="5.500" y="5.500" width="8" height="3"/><rect x="5.500" y="10.500" width="8" height="3"/></g><path d="M1.500 0v4M.5 1l1-1M.8 6c1.500-1 2 .5.2 2.500h1.800M.5 10h1.800l-1 1.500c1.500 0 1.500 2-.8 2" fill="none" stroke="#2a6a9a" stroke-width=".9"/></svg>
<div class="t " id="t80" style="left:81.0px;top:80.5px;font-size:12.4px;color:#8b0000;transform:scaleX(1.0697);transform-origin:0 0;">_coord</div>
<div class="t " id="t81" style="left:125.58px;top:80.5px;font-size:12.4px;color:#1a1a1a;transform:scaleX(1.3972);transform-origin:0 0;">=</div>
<div class="t " id="t82" style="left:139.77px;top:80.5px;font-size:12.4px;color:#8a8a8a;transform:scaleX(1.3545);transform-origin:0 0;">{tuple}</div>
<div class="t " id="t83" style="left:191.44px;top:80.5px;font-size:12.4px;color:#1a1a1a;transform:scaleX(1.1818);transform-origin:0 0;">(485.0,</div>
<div class="t " id="t84" style="left:241.09px;top:80.5px;font-size:12.4px;color:#1a1a1a;transform:scaleX(1.1764);transform-origin:0 0;">791.0,</div>
<div class="t " id="t85" style="left:285.67px;top:80.5px;font-size:12.4px;color:#1a1a1a;transform:scaleX(1.1859);transform-origin:0 0;">0.0)</div>
<svg class="abs" style="left:44.5px;top:101.5px;" width="8" height="9" viewBox="0 0 8 9"><path d="M0 0 7.500 4.500 0 9z" fill="#a4a4a4"/></svg>
<svg class="abs" style="left:64px;top:99px;" width="13" height="13" viewBox="0 0 13 13"><rect x="0" y="0" width="13" height="3.300" fill="#b98a50"/><rect x="0" y="4.800" width="13" height="3.300" fill="#b98a50"/><rect x="0" y="9.600" width="13" height="3.300" fill="#b98a50"/></svg>
<div class="t " id="t86" style="left:81.0px;top:99.5px;font-size:12.4px;color:#8b0000;transform:scaleX(0.9936);transform-origin:0 0;">_foes</div>
<div class="t " id="t87" style="left:115.13px;top:99.5px;font-size:12.4px;color:#1a1a1a;transform:scaleX(1.3848);transform-origin:0 0;">=</div>
<div class="t " id="t88" style="left:129.19px;top:99.5px;font-size:12.4px;color:#8a8a8a;transform:scaleX(1.4204);transform-origin:0 0;">{dict}</div>
<div class="t " id="t89" style="left:172.35px;top:99.5px;font-size:12.4px;color:#1a1a1a;transform:scaleX(1.3863);transform-origin:0 0;">{0:</div>
<div class="t " id="t90" style="left:196.45px;top:99.5px;font-size:12.4px;color:#1a1a1a;transform:scaleX(1.2140);transform-origin:0 0;">u'111000',</div>
<div class="t " id="t91" style="left:266.72px;top:99.5px;font-size:12.4px;color:#1a1a1a;transform:scaleX(1.1649);transform-origin:0 0;">1:</div>
<div class="t " id="t92" style="left:282.78px;top:99.5px;font-size:12.4px;color:#1a1a1a;transform:scaleX(1.1939);transform-origin:0 0;">u'110000',</div>
<div class="t " id="t93" style="left:353.05px;top:99.5px;font-size:12.4px;color:#1a1a1a;transform:scaleX(1.1649);transform-origin:0 0;">2:</div>
<div class="t " id="t94" style="left:369.12px;top:99.5px;font-size:12.4px;color:#1a1a1a;transform:scaleX(1.1744);transform-origin:0 0;">u'100000',</div>
<div class="t " id="t95" style="left:439.39px;top:99.5px;font-size:12.4px;color:#1a1a1a;transform:scaleX(1.1649);transform-origin:0 0;">3:</div>
<div class="t " id="t96" style="left:455.45px;top:99.5px;font-size:12.4px;color:#1a1a1a;transform:scaleX(1.1744);transform-origin:0 0;">u'000001',</div>
<div class="t " id="t97" style="left:525.72px;top:99.5px;font-size:12.4px;color:#1a1a1a;transform:scaleX(1.1649);transform-origin:0 0;">4:</div>
<div class="t " id="t98" style="left:541.79px;top:99.5px;font-size:12.4px;color:#1a1a1a;transform:scaleX(1.1708);transform-origin:0 0;">u'0000...</div>
<div class="abs" style="left:0px;top:115px;width:635px;height:19px;background:#3875d7"></div>
<svg class="abs" style="left:64px;top:119px;" width="13" height="12" viewBox="0 0 13 12"><rect x=".5" y=".5" width="12" height="11" fill="#c4c8d0" stroke="#5a5a5a"/><path d="M3.500 3v6M3 4l.5-1M6.500 3h2.500v2.500H6.500V9H9" fill="none" stroke="#4a4a4a" stroke-width=".9"/></svg>
<div class="t " id="t99" style="left:81.0px;top:118.5px;font-size:12.4px;color:#fff;transform:scaleX(1.0437);transform-origin:0 0;">_id</div>
<div class="t " id="t100" style="left:102.34px;top:118.5px;font-size:12.4px;color:#fff;transform:scaleX(1.4014);transform-origin:0 0;">=</div>
<div class="t " id="t101" style="left:116.56px;top:118.5px;font-size:12.4px;color:#fff;transform:scaleX(1.2579);transform-origin:0 0;">{unicode}</div>
<div class="t " id="t102" style="left:185.65px;top:118.5px;font-size:12.4px;color:#fff;transform:scaleX(1.2071);transform-origin:0 0;">u'5'</div>
<svg class="abs" style="left:44.5px;top:139.5px;" width="8" height="9" viewBox="0 0 8 9"><path d="M0 0 7.500 4.500 0 9z" fill="#a4a4a4"/></svg>
<svg class="abs" style="left:63px;top:137px;" width="15" height="14" viewBox="0 0 15 14"><g fill="none" stroke="#555" stroke-width="1"><rect x="5.500" y=".5" width="8" height="3"/><rect x="5.500" y="5.500" width="8" height="3"/><rect x="5.500" y="10.500" width="8" height="3"/></g><path d="M1.500 0v4M.5 1l1-1M.8 6c1.500-1 2 .5.2 2.500h1.800M.5 10h1.800l-1 1.500c1.500 0 1.500 2-.8 2" fill="none" stroke="#2a6a9a" stroke-width=".9"/></svg>
<div class="t " id="t103" style="left:81.0px;top:137.5px;font-size:12.4px;color:#8b0000;transform:scaleX(1.0545);transform-origin:0 0;">_incLanes</div>
<div class="t " id="t104" style="left:144.62px;top:137.5px;font-size:12.4px;color:#1a1a1a;transform:scaleX(1.3931);transform-origin:0 0;">=</div>
<div class="t " id="t105" style="left:158.75px;top:137.5px;font-size:12.4px;color:#8a8a8a;transform:scaleX(1.4226);transform-origin:0 0;">{list}</div>
<div class="t " id="t106" style="left:196.12px;top:137.5px;font-size:12.4px;color:#1a1a1a;transform:scaleX(1.1596);transform-origin:0 0;">[u'7_0',</div>
<div class="t " id="t107" style="left:245.6px;top:137.5px;font-size:12.4px;color:#1a1a1a;transform:scaleX(1.1580);transform-origin:0 0;">u'5_0']</div>
<svg class="abs" style="left:44.5px;top:158.5px;" width="8" height="9" viewBox="0 0 8 9"><path d="M0 0 7.500 4.500 0 9z" fill="#a4a4a4"/></svg>
<svg class="abs" style="left:63px;top:156px;" width="15" height="14" viewBox="0 0 15 14"><g fill="none" stroke="#555" stroke-width="1"><rect x="5.500" y=".5" width="8" height="3"/><rect x="5.500" y="5.500" width="8" height="3"/><rect x="5.500" y="10.500" width="8" height="3"/></g><path d="M1.500 0v4M.5 1l1-1M.8 6c1.500-1 2 .5.2 2.500h1.800M.5 10h1.800l-1 1.500c1.500 0 1.500 2-.8 2" fill="none" stroke="#2a6a9a" stroke-width=".9"/></svg>
<div class="t " id="t108" style="left:81.0px;top:156.5px;font-size:12.4px;color:#8b0000;transform:scaleX(1.0856);transform-origin:0 0;">_incoming</div>
<div class="t " id="t109" style="left:146.28px;top:156.5px;font-size:12.4px;color:#1a1a1a;transform:scaleX(1.3641);transform-origin:0 0;">=</div>
<div class="t " id="t110" style="left:160.13px;top:156.5px;font-size:12.4px;color:#8a8a8a;transform:scaleX(1.3936);transform-origin:0 0;">{list}</div>
<div class="t " id="t111" style="left:196.72px;top:156.5px;font-size:12.4px;color:#1a1a1a;transform:scaleX(1.1637);transform-origin:0 0;">[&lt;edge</div>
<div class="t " id="t112" style="left:245.19px;top:156.5px;font-size:12.4px;color:#1a1a1a;transform:scaleX(1.2447);transform-origin:0 0;">id="5"</div>
<div class="t " id="t113" style="left:289.69px;top:156.5px;font-size:12.4px;color:#1a1a1a;transform:scaleX(1.2023);transform-origin:0 0;">from="3"</div>
<div class="t " id="t114" style="left:351.02px;top:156.5px;font-size:12.4px;color:#1a1a1a;transform:scaleX(1.2521);transform-origin:0 0;">to="5"/&gt;,</div>
<div class="t " id="t115" style="left:414.32px;top:156.5px;font-size:12.4px;color:#1a1a1a;transform:scaleX(1.1364);transform-origin:0 0;">&lt;edge</div>
<div class="t " id="t116" style="left:457.84px;top:156.5px;font-size:12.4px;color:#1a1a1a;transform:scaleX(1.2447);transform-origin:0 0;">id="7"</div>
<div class="t " id="t117" style="left:502.34px;top:156.5px;font-size:12.4px;color:#1a1a1a;transform:scaleX(1.2023);transform-origin:0 0;">from="4"</div>
<div class="t " id="t118" style="left:563.67px;top:156.5px;font-size:12.4px;color:#1a1a1a;transform:scaleX(1.2730);transform-origin:0 0;">to="5"/&gt;]</div>
<svg class="abs" style="left:64px;top:176px;" width="13" height="12" viewBox="0 0 13 12"><rect x=".5" y=".5" width="12" height="11" fill="#f4f4f4" stroke="#777"/><path d="M3.500 3v6M3 4l.5-1M6.500 3h2.500v2.500H6.500V9H9" fill="none" stroke="#777" stroke-width=".9"/></svg>
<div class="t " id="t119" style="left:81.0px;top:175.5px;font-size:12.4px;color:#8b0000;transform:scaleX(1.0889);transform-origin:0 0;">_intLanes</div>
<div class="t " id="t120" style="left:143.64px;top:175.5px;font-size:12.4px;color:#1a1a1a;transform:scaleX(1.4166);transform-origin:0 0;">=</div>
<div class="t " id="t121" style="left:158.02px;top:175.5px;font-size:12.4px;color:#8a8a8a;transform:scaleX(1.2050);transform-origin:0 0;">{NoneType}</div>
<div class="t " id="t122" style="left:240.17px;top:175.5px;font-size:12.4px;color:#1a1a1a;transform:scaleX(1.0744);transform-origin:0 0;">None</div>
<div class="t " id="t123" style="left:602px;top:99.5px;font-size:12.4px;color:#8a8a8a;transform:scaleX(1.1261);transform-origin:0 0;">View</div>
<div class="abs" style="left:635px;top:0px;width:13px;height:193px;background:#f3f3f3;border-left:1px solid #e0e0e0"></div>
<div class="abs" style="left:636px;top:2px;width:11px;height:46px;background:#d4d4d4;border:1px solid #bcbcbc;border-radius:2px"></div>
<div class="abs" style="left:0px;top:179px;width:635px;height:14px;background:#f3f3f3;border-top:1px solid #e0e0e0"></div>
<div class="abs" style="left:1px;top:181px;width:246px;height:10px;background:#dcdcdc;border:1px solid #bcbcbc;border-radius:2px"></div>
</div>
<div class="abs" style="left:1015px;top:428px;width:351px;height:193px;background:#fff"></div>
<div class="t con" style="left:1015px;top:445.5px;color:#1a1a1a"> Retrying in 1 seconds</div>
<div class="t con" style="left:1015px;top:460.5px;color:#1a1a1a">Loading configuration... done.</div>
<div class="t con" style="left:1015px;top:475.5px;color:#1a1a1a">Edge Id: 1From : 1To :2</div>
<div class="t con" style="left:1015px;top:490.5px;color:#1a1a1a">Backend TkAgg is interactive backend. Turning int</div>
<div class="t con" style="left:1015px;top:505.5px;color:#1a1a1a">Edge Id: 10From : 5To :8</div>
<div class="t con" style="left:1015px;top:550.5px;color:#3a9a3a">&gt;&gt;&gt;</div>
<div class="abs" style="left:1353px;top:428px;width:13px;height:193px;background:#f3f3f3;border-left:1px solid #e0e0e0"></div>
<div class="abs" style="left:1015px;top:607px;width:338px;height:14px;background:#f3f3f3;border-top:1px solid #e0e0e0"></div>
<div class="abs" style="left:1016px;top:609px;width:225px;height:10px;background:#dcdcdc;border:1px solid #bcbcbc;border-radius:2px"></div>
<div class="abs" style="left:65px;top:621px;width:1301px;height:22px;background:#e8e8e8;border-top:1px solid #a8a8a8;border-bottom:1px solid #a8a8a8"></div>
<div class="abs" style="left:156px;top:622px;width:89px;height:20px;background:#bebebe"></div>
<svg class="abs" style="left:94px;top:625px;" width="13" height="14" viewBox="0 0 13 14"><path d="M1 .8 12 7 1 13.200z" fill="#3aa845" stroke="#2e9639" stroke-width=".8"/></svg>
<div class="t " id="t124" style="left:110.5px;top:627.5px;font-size:11.9px;color:#1a1a1a;transform:scaleX(1.0272);transform-origin:0 0;"><u>4</u>: Run</div>
<svg class="abs" style="left:166px;top:624px;" width="16" height="16" viewBox="0 0 16 16"><g><ellipse cx="7" cy="8" rx="4.800" ry="5.300" fill="#4bb04f"/><path d="M4 2.500 5.500 4M10.500 2.500 9 4M1 6l2 1M1 10.500l2-.5M2.500 14l1.500-1.500" stroke="#3d8f41" stroke-width="1.200"/><path d="M9 4.500c3 1 3 6 0 7.500z" fill="#8a8a8a"/><path d="M11 5l3-1.500M12 8h3M11 11l3 1.500" stroke="#777" stroke-width="1.200"/><circle cx="12.500" cy="13" r="2.300" fill="#3bc84a"/></g></svg>
<div class="t " id="t125" style="left:184.5px;top:627.5px;font-size:11.9px;color:#1a1a1a;transform:scaleX(1.0356);transform-origin:0 0;"><u>5</u>: Debug</div>
<svg class="abs" style="left:257px;top:624px;" width="15" height="16" viewBox="0 0 16 16"><g opacity="1"><path d="M7.800 1C5 1 4.600 2.200 4.600 3.200v1.600h3.400v.6H3.200C1.800 5.400 1 6.600 1 8.200c0 1.700.8 2.800 2.200 2.800h1.300V9.300c0-1.300 1-2.300 2.300-2.300h3c1 0 1.800-.8 1.800-1.800V3.200C11.600 1.800 10.400 1 7.800 1z" fill="#4584b6"/><path d="M8.200 15c2.800 0 3.200-1.200 3.200-2.200v-1.600H8v-.6h4.800c1.400 0 2.200-1.200 2.200-2.800 0-1.700-.8-2.800-2.200-2.800h-1.300v1.700c0 1.300-1 2.300-2.300 2.300h-3c-1 0-1.800.8-1.800 1.800v2c0 1.400 1.200 2.200 3.800 2.200z" fill="#ffcc3b"/></g><path d="M9 9l4 3-4 3" fill="none" stroke="#444" stroke-width="1.300"/></svg>
<div class="t " id="t126" style="left:275.5px;top:627.5px;font-size:11.9px;color:#1a1a1a;transform:scaleX(1.0363);transform-origin:0 0;">Python Console</div>
<div class="abs" style="left:65px;top:643px;width:1301px;height:21px;background:#e8e8e8"></div>
<div class="abs" style="left:74px;top:647px;width:14px;height:13px;background:#c4c4c4;border:1px solid #777;box-shadow:0 1px 0 #555"></div>
<div class="t " id="t127" style="left:96.5px;top:648px;font-size:12.6px;color:#1a1a1a;transform:scaleX(0.9985);transform-origin:0 0;">OpenJDK</div>
<div class="t " id="t128" style="left:155.15px;top:648px;font-size:12.6px;color:#1a1a1a;transform:scaleX(1.1731);transform-origin:0 0;">6</div>
<div class="t " id="t129" style="left:167.5px;top:648px;font-size:12.6px;color:#1a1a1a;transform:scaleX(1.0165);transform-origin:0 0;">is</div>
<div class="t " id="t130" style="left:180.87px;top:648px;font-size:12.6px;color:#1a1a1a;transform:scaleX(1.1750);transform-origin:0 0;">not</div>
<div class="t " id="t131" style="left:205.57px;top:648px;font-size:12.6px;color:#1a1a1a;transform:scaleX(1.1410);transform-origin:0 0;">supported.</div>
<div class="t " id="t132" style="left:277.59px;top:648px;font-size:12.6px;color:#1a1a1a;transform:scaleX(0.9884);transform-origin:0 0;">Please</div>
<div class="t " id="t133" style="left:319.78px;top:648px;font-size:12.6px;color:#1a1a1a;transform:scaleX(1.0639);transform-origin:0 0;">use</div>
<div class="t " id="t134" style="left:345.5px;top:648px;font-size:12.6px;color:#1a1a1a;transform:scaleX(1.0541);transform-origin:0 0;">Oracle</div>
<div class="t " id="t135" style="left:388.72px;top:648px;font-size:12.6px;color:#1a1a1a;transform:scaleX(0.9666);transform-origin:0 0;">Java</div>
<div class="t " id="t136" style="left:418.56px;top:648px;font-size:12.6px;color:#1a1a1a;transform:scaleX(1.1024);transform-origin:0 0;">or</div>
<div class="t " id="t137" style="left:435.02px;top:648px;font-size:12.6px;color:#1a1a1a;transform:scaleX(1.1095);transform-origin:0 0;">newer</div>
<div class="t " id="t138" style="left:477.2px;top:648px;font-size:12.6px;color:#1a1a1a;transform:scaleX(1.0093);transform-origin:0 0;">OpenJDK.</div>
<div class="t " id="t139" style="left:539.97px;top:648px;font-size:12.6px;color:#1a1a1a;transform:scaleX(1.1757);transform-origin:0 0;">//</div>
<div class="t " id="t140" style="left:552.32px;top:648px;font-size:12.6px;color:#1a1a1a;transform:scaleX(1.0218);transform-origin:0 0;">Do</div>
<div class="t " id="t141" style="left:572.9px;top:648px;font-size:12.6px;color:#1a1a1a;transform:scaleX(1.1750);transform-origin:0 0;">not</div>
<div class="t " id="t142" style="left:597.59px;top:648px;font-size:12.6px;color:#1a1a1a;transform:scaleX(1.0848);transform-origin:0 0;">show</div>
<div class="t " id="t143" style="left:633.6px;top:648px;font-size:12.6px;color:#1a1a1a;transform:scaleX(1.1090);transform-origin:0 0;">again.</div>
<div class="t " id="t144" style="left:675.79px;top:648px;font-size:12.6px;color:#1a1a1a;transform:scaleX(1.1798);transform-origin:0 0;">(25/3/19</div>
<div class="t " id="t145" style="left:734.44px;top:648px;font-size:12.6px;color:#1a1a1a;transform:scaleX(1.1752);transform-origin:0 0;">3:13</div>
<div class="t " id="t146" style="left:767.36px;top:648px;font-size:12.6px;color:#1a1a1a;transform:scaleX(0.9803);transform-origin:0 0;">PM)</div>
<div class="t " id="t147" style="left:1108px;top:648px;font-size:12.6px;color:#1a1a1a;transform:scaleX(1.1177);transform-origin:0 0;">24 chars</div>
<div class="t " id="t148" style="left:1183px;top:648px;font-size:12.6px;color:#1a1a1a;transform:scaleX(1.1160);transform-origin:0 0;">259:59</div>
<div class="t " id="t149" style="left:1238px;top:648px;font-size:12.6px;color:#1a1a1a;transform:scaleX(0.9522);transform-origin:0 0;">LF</div>
<svg class="abs" style="left:1253.5px;top:651px;" width="4.5" height="8" viewBox="0 0 4.5 8"><path d="M2.250 0 4.500 3H0zM2.250 8 4.500 5H0z" fill="#444"/></svg>
<div class="t " id="t150" style="left:1268px;top:648px;font-size:12.6px;color:#1a1a1a;transform:scaleX(1.0368);transform-origin:0 0;">UTF-8</div>
<svg class="abs" style="left:1306.5px;top:651px;" width="4.5" height="8" viewBox="0 0 4.5 8"><path d="M2.250 0 4.500 3H0zM2.250 8 4.500 5H0z" fill="#444"/></svg>
<svg class="abs" style="left:1322px;top:648px;" width="11" height="12" viewBox="0 0 11 12"><rect x="3.500" y="5.500" width="7" height="6" fill="#d8d8d8" stroke="#888"/><path d="M1.500 6V3.500c0-3 4.500-3 4.500 0v2" fill="none" stroke="#888" stroke-width="1.300"/></svg>
<svg class="abs" style="left:1345px;top:646px;" width="15" height="16" viewBox="0 0 15 16"><circle cx="7.500" cy="5.500" r="4.500" fill="#eee" stroke="#666"/><path d="M3 4.500h9" stroke="#666" stroke-width="1.500"/><path d="M2 15c0-4 2-5 5.500-5s5.500 1 5.500 5z" fill="#eee" stroke="#666"/><circle cx="5.800" cy="6.800" r=".8" fill="#444"/><circle cx="9.200" cy="6.800" r=".8" fill="#444"/></svg>
<svg class="abs" style="left:864px;top:488.5px;" width="14" height="22" viewBox="0 0 14 22"><path d="M1.500 1.500v15.500l3.700-3.600 2.600 6.300 2.600-1.100-2.600-6.100h4.700z" fill="#f4f4f4" stroke="#111" stroke-width="1.300" stroke-linejoin="round"/></svg>
</body>
</html>
